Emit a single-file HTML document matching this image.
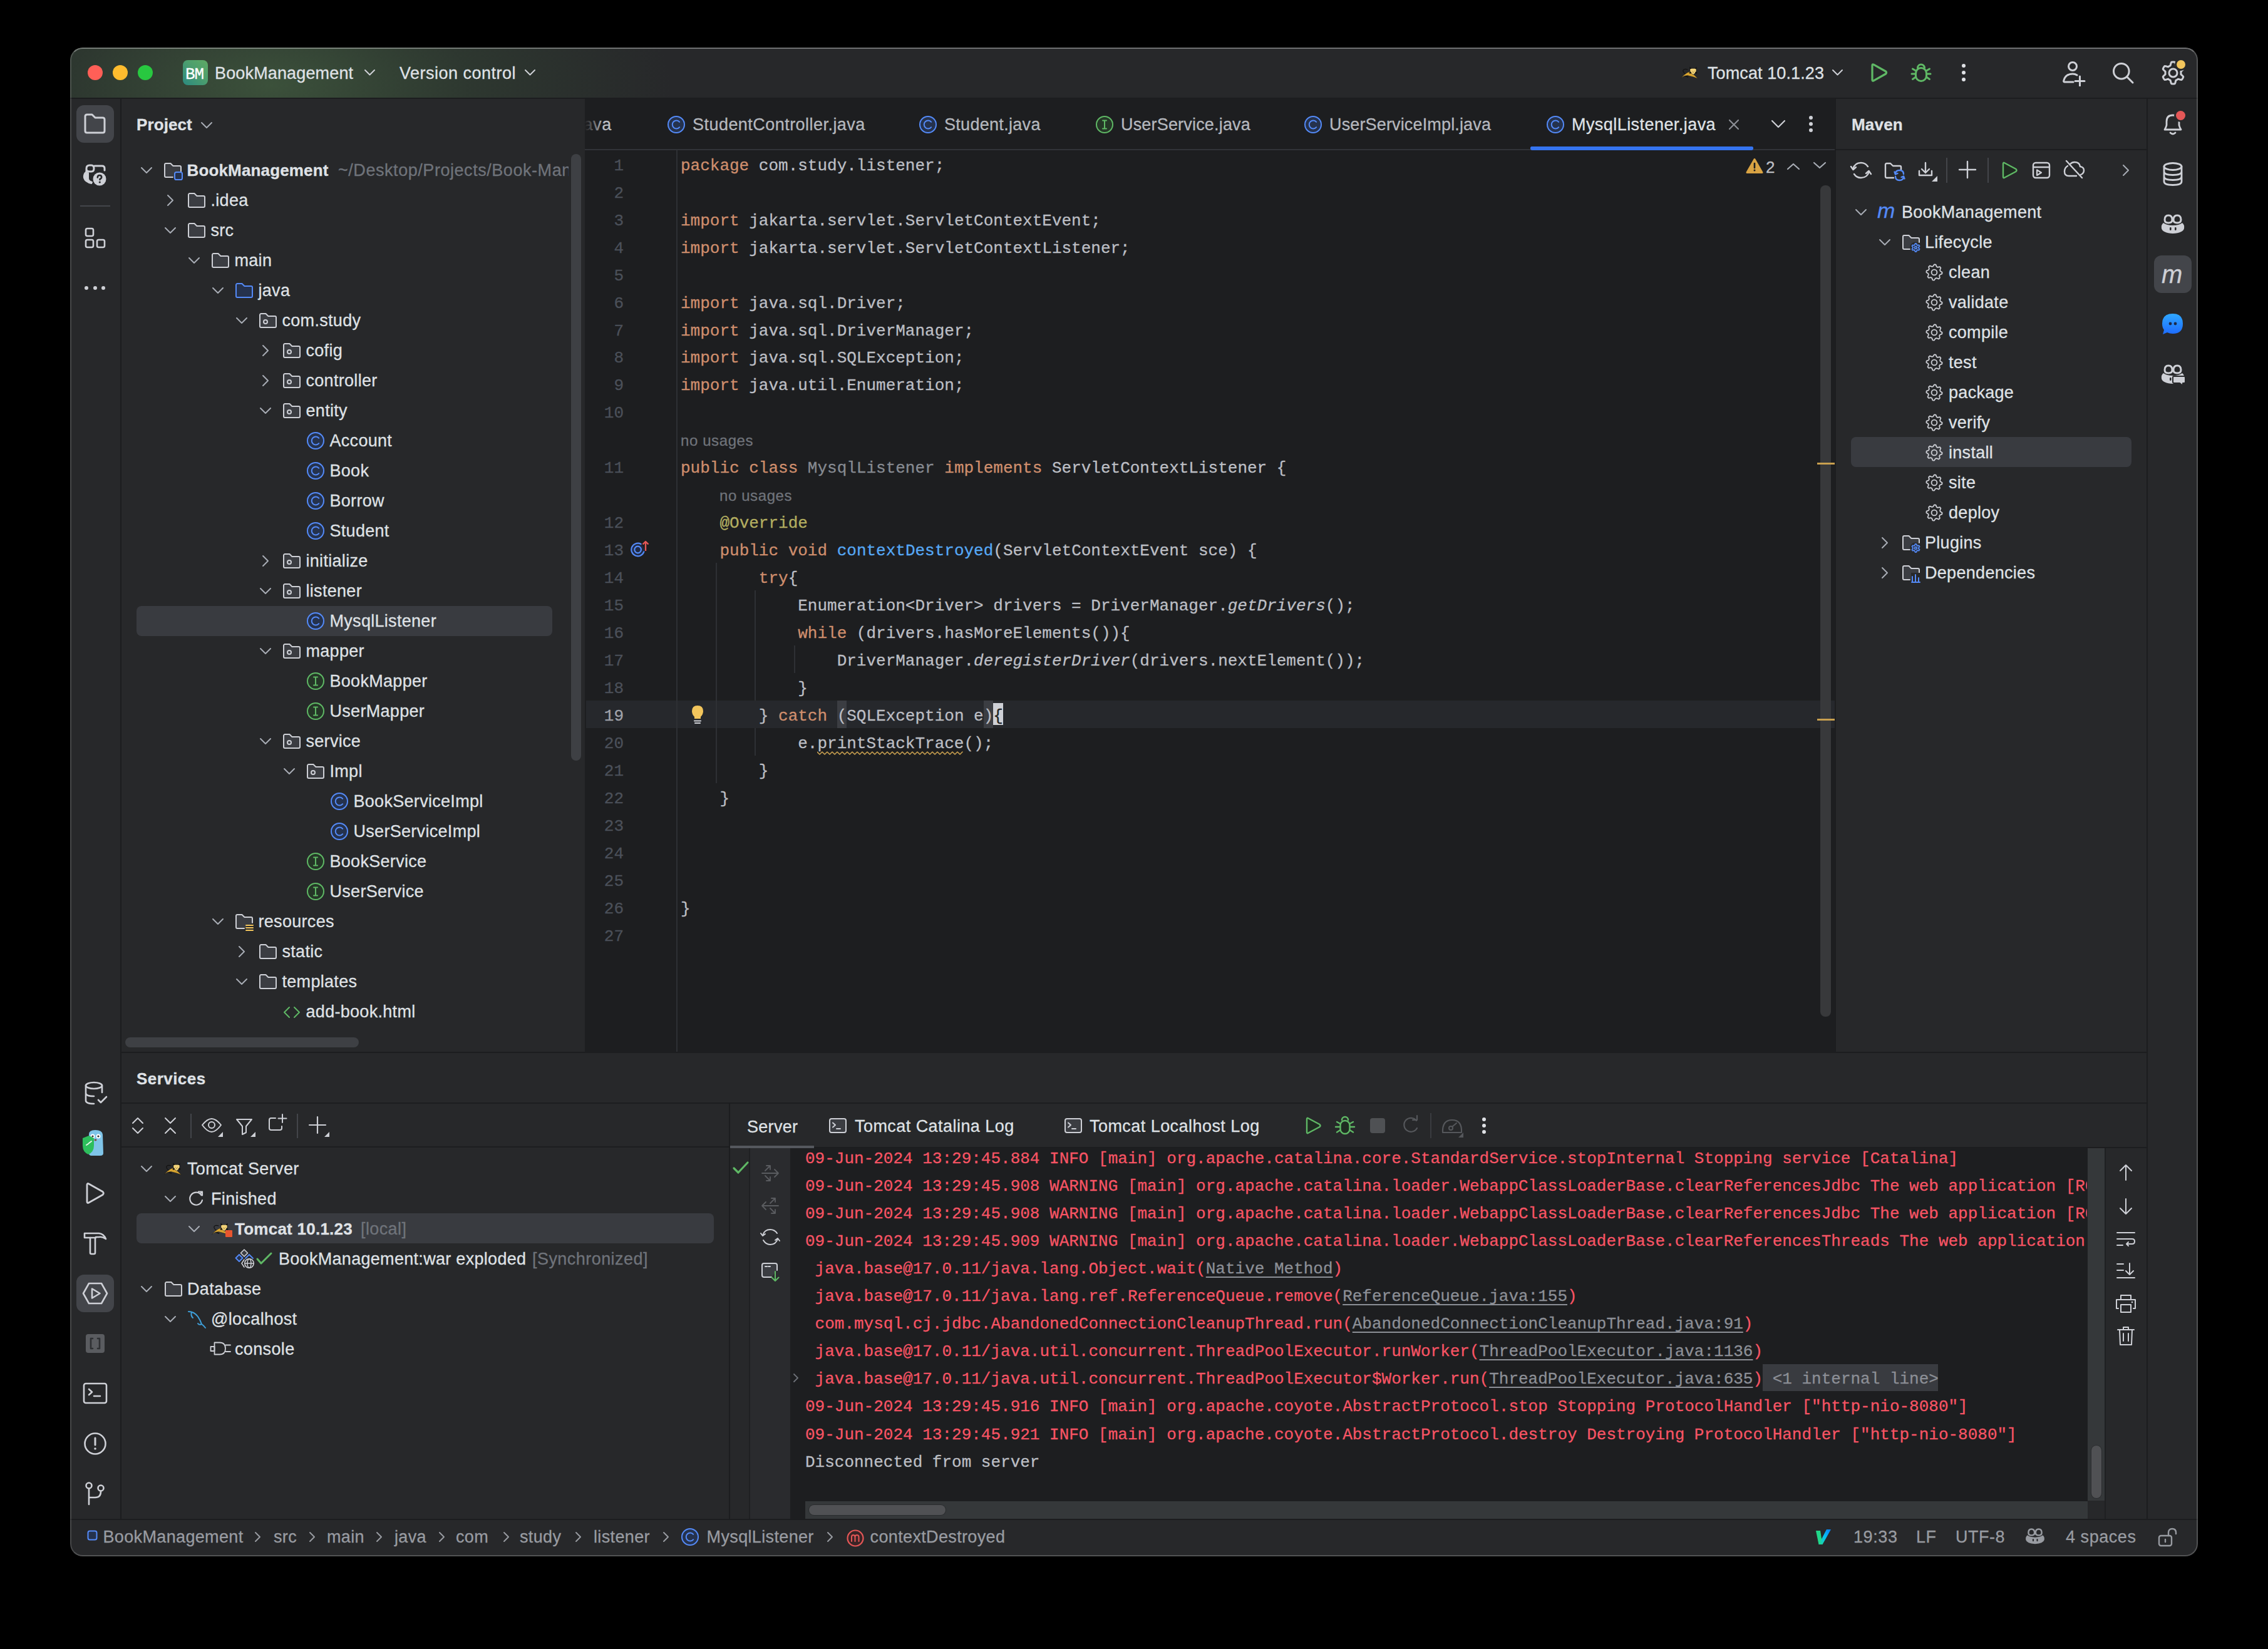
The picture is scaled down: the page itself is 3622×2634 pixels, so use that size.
<!DOCTYPE html>
<html><head><meta charset="utf-8"><title>IntelliJ IDEA</title>
<style>
html,body{margin:0;padding:0;background:#000;width:3622px;height:2634px;overflow:hidden;}
#clip div{-webkit-text-stroke:0.3px currentColor;}
#clip{position:absolute;left:0;top:0;width:3622px;height:2634px;clip-path:inset(76px 112px 148px 112px round 20px);}
</style></head><body>
<div id="clip">
<div style="position:absolute;left:112px;top:76px;width:3398px;height:2410px;background:#27282A;border-radius:20px;"></div>
<div style="position:absolute;left:112px;top:76px;width:3398px;height:80px;border-radius:20px 20px 0 0;background:radial-gradient(ellipse 640px 280px at 320px 60px, rgba(78,118,74,0.52), rgba(62,95,62,0.28) 50%, rgba(39,40,42,0) 100%), #27282A;"></div>
<div style="position:absolute;left:112px;top:156px;width:3398px;height:2px;background:#1C1D1F;border-radius:0px;"></div>
<div style="position:absolute;left:192px;top:158px;width:2px;height:2268px;background:#1C1D1F;border-radius:0px;"></div>
<div style="position:absolute;left:3428px;top:158px;width:2px;height:2268px;background:#1C1D1F;border-radius:0px;"></div>
<div style="position:absolute;left:934px;top:158px;width:1998px;height:1522px;background:#1D1E20;border-radius:0px;"></div>
<div style="position:absolute;left:2930px;top:158px;width:2px;height:1522px;background:#1C1D1F;border-radius:0px;"></div>
<div style="position:absolute;left:194px;top:1680px;width:3234px;height:2px;background:#1C1D1F;border-radius:0px;"></div>
<div style="position:absolute;left:112px;top:2426px;width:3398px;height:2px;background:#1C1D1F;border-radius:0px;"></div>
<div style="position:absolute;left:140px;top:104px;width:24px;height:24px;border-radius:12px;background:#FF5F57"></div>
<div style="position:absolute;left:180px;top:104px;width:24px;height:24px;border-radius:12px;background:#FEBC2E"></div>
<div style="position:absolute;left:220px;top:104px;width:24px;height:24px;border-radius:12px;background:#28C840"></div>
<div style="position:absolute;left:292px;top:96px;width:40px;height:40px;border-radius:8px;background:linear-gradient(45deg,#2B8A80 0%,#4C9E6E 55%,#5FAA64 100%)"></div>
<div style="position:absolute;left:296px;top:106px;font-family:'Liberation Mono', monospace;font-size:26px;line-height:26px;font-weight:400;color:#FFFFFF;letter-spacing:-1.2px;white-space:pre;">BM</div>
<div style="position:absolute;left:343px;top:104px;font-family:'Liberation Sans', sans-serif;font-size:27px;line-height:27px;font-weight:400;color:#DFE1E5;letter-spacing:0.15px;white-space:pre;">BookManagement</div>
<svg style="position:absolute;left:580.5px;top:110.25px;" width="19" height="11.5" viewBox="0 0 19 11.5" fill="none" stroke-linecap="round" stroke-linejoin="round"><path d="M2 2L9.5 9.5L17 2" stroke="#CED0D6" stroke-width="2"/></svg>
<div style="position:absolute;left:638px;top:104px;font-family:'Liberation Sans', sans-serif;font-size:27px;line-height:27px;font-weight:400;color:#DFE1E5;letter-spacing:0.5px;white-space:pre;">Version control</div>
<svg style="position:absolute;left:836.5px;top:110.25px;" width="19" height="11.5" viewBox="0 0 19 11.5" fill="none" stroke-linecap="round" stroke-linejoin="round"><path d="M2 2L9.5 9.5L17 2" stroke="#CED0D6" stroke-width="2"/></svg>
<svg style="position:absolute;left:2676px;top:94px;" width="44" height="44" viewBox="0 0 44 44" fill="none" stroke-linecap="round" stroke-linejoin="round"><path d="M16 25Q11 21 12 18Q14 15.5 19 17" stroke="#111" stroke-width="1.2" fill="none"/><path d="M14 27L19.5 29" stroke="#111" stroke-width="1.6"/><path d="M8.5 30.5L13 26Q18 21.5 23.5 20L27 23.5Q31 27 35.5 31.5Q28 28.5 19 26.5L13.5 27.5Z" fill="#D9A530" stroke="#1a1a1a" stroke-width="0.5"/><path d="M23 14L25.3 15.3H30.7L33 14V19.5Q31.5 23.5 28 25.5Q24.5 23.5 23 19.5Z" fill="#F6D67A" stroke="#111" stroke-width="0.6"/><path d="M22.5 12.5L25.5 15.5L23 16.5ZM33.5 12.5L30.5 15.5L33 16.5Z" fill="#111"/><ellipse cx="23.3" cy="22.3" rx="1.6" ry="1.4" fill="#111"/><ellipse cx="32.7" cy="22.3" rx="1.6" ry="1.4" fill="#111"/><path d="M26 19.5L27 20.3M30 19.5L29 20.3M27.3 21.8H28.7" stroke="#8a6a2a" stroke-width="0.7"/></svg>
<div style="position:absolute;left:2727px;top:104px;font-family:'Liberation Sans', sans-serif;font-size:27px;line-height:27px;font-weight:400;color:#DFE1E5;letter-spacing:0.1px;white-space:pre;">Tomcat 10.1.23</div>
<svg style="position:absolute;left:2924.5px;top:110.25px;" width="19" height="11.5" viewBox="0 0 19 11.5" fill="none" stroke-linecap="round" stroke-linejoin="round"><path d="M2 2L9.5 9.5L17 2" stroke="#CED0D6" stroke-width="2"/></svg>
<svg style="position:absolute;left:2984px;top:98px;" width="34" height="36" viewBox="0 0 34 36" fill="none" stroke-linecap="round" stroke-linejoin="round"><path d="M6 6.5Q6 4 8.2 5.2L27.5 16Q29.5 18 27.5 20L8.2 30.8Q6 32 6 29.5Z" stroke="#5FB865" stroke-width="3.2"/></svg>
<svg style="position:absolute;left:3050px;top:98px;" width="36" height="36" viewBox="0 0 36 36" fill="none" stroke-linecap="round" stroke-linejoin="round"><path d="M12.5 10.5A5.5 5.5 0 0 1 23.5 10.5" stroke="#5FB865" stroke-width="3"/><rect x="9.5" y="10.5" width="17" height="21" rx="8.5" stroke="#5FB865" stroke-width="3"/><path d="M3 20H9.5M26.5 20H33M4.5 12L9.5 15M31.5 12L26.5 15M4.5 28.5L9.5 25M31.5 28.5L26.5 25" stroke="#5FB865" stroke-width="3"/></svg>
<div style="position:absolute;left:3133px;top:102px;width:6px;height:6px;border-radius:3px;background:#DFE1E5"></div>
<div style="position:absolute;left:3133px;top:113px;width:6px;height:6px;border-radius:3px;background:#DFE1E5"></div>
<div style="position:absolute;left:3133px;top:124px;width:6px;height:6px;border-radius:3px;background:#DFE1E5"></div>
<svg style="position:absolute;left:3290px;top:94px;" width="44" height="44" viewBox="0 0 44 44" fill="none" stroke-linecap="round" stroke-linejoin="round"><circle cx="20" cy="12" r="6.5" stroke="#CED0D6" stroke-width="3"/><path d="M21 37H7Q5 37 6 34Q9 24 20 24Q24 24 27 26" stroke="#CED0D6" stroke-width="3"/><path d="M31.5 28V43M24 35.5H39" stroke="#CED0D6" stroke-width="3"/></svg>
<svg style="position:absolute;left:3370px;top:96px;" width="42" height="42" viewBox="0 0 42 42" fill="none" stroke-linecap="round" stroke-linejoin="round"><circle cx="17.8" cy="17.7" r="12.3" stroke="#CED0D6" stroke-width="3"/><path d="M27 27L36 36" stroke="#CED0D6" stroke-width="3"/></svg>
<svg style="position:absolute;left:3449.5px;top:95.5px;" width="41.0" height="41.0" viewBox="0 0 41.0 41.0" fill="none" stroke-linecap="round" stroke-linejoin="round"><path d="M20.50 3.00L21.42 3.02L22.33 3.10L23.22 3.32L23.86 4.71L24.32 6.25L24.63 7.79L24.98 8.83L25.58 9.08L26.17 9.36L26.75 9.67L27.31 10.02L27.85 10.39L28.37 10.79L29.44 10.57L30.93 10.07L32.49 9.70L34.02 9.55L34.66 10.21L35.18 10.97L35.66 11.75L36.09 12.56L36.49 13.38L36.74 14.27L35.85 15.51L34.75 16.68L33.57 17.72L32.85 18.54L32.93 19.19L32.98 19.85L33.00 20.50L32.98 21.15L32.93 21.81L32.85 22.46L33.57 23.28L34.75 24.32L35.85 25.49L36.74 26.73L36.49 27.62L36.09 28.44L35.66 29.25L35.18 30.03L34.66 30.79L34.02 31.45L32.49 31.30L30.93 30.93L29.44 30.43L28.37 30.21L27.85 30.61L27.31 30.98L26.75 31.33L26.17 31.64L25.58 31.92L24.98 32.17L24.63 33.21L24.32 34.75L23.86 36.29L23.22 37.68L22.33 37.90L21.42 37.98L20.50 38.00L19.58 37.98L18.67 37.90L17.78 37.68L17.14 36.29L16.68 34.75L16.37 33.21L16.02 32.17L15.42 31.92L14.83 31.64L14.25 31.33L13.69 30.98L13.15 30.61L12.63 30.21L11.56 30.43L10.07 30.93L8.51 31.30L6.98 31.45L6.34 30.79L5.82 30.03L5.34 29.25L4.91 28.44L4.51 27.62L4.26 26.73L5.15 25.49L6.25 24.32L7.43 23.28L8.15 22.46L8.07 21.81L8.02 21.15L8.00 20.50L8.02 19.85L8.07 19.19L8.15 18.54L7.43 17.72L6.25 16.68L5.15 15.51L4.26 14.27L4.51 13.38L4.91 12.56L5.34 11.75L5.82 10.97L6.34 10.21L6.98 9.55L8.51 9.70L10.07 10.07L11.56 10.57L12.63 10.79L13.15 10.39L13.69 10.02L14.25 9.67L14.83 9.36L15.42 9.08L16.02 8.83L16.37 7.79L16.68 6.25L17.14 4.71L17.78 3.32L18.67 3.10L19.58 3.02Z" stroke="#CED0D6" stroke-width="3"/><circle cx="20.5" cy="20.5" r="6.5" stroke="#CED0D6" stroke-width="3"/></svg>
<div style="position:absolute;left:3476px;top:96px;width:14px;height:14px;border-radius:7px;background:#F2C55C;box-shadow:0 0 0 3px #27282A"></div>
<div style="position:absolute;left:122px;top:168px;width:60px;height:60px;background:#43454A;border-radius:12px;"></div>
<svg style="position:absolute;left:130px;top:176px;" width="44" height="44" viewBox="0 0 44 44" fill="none" stroke-linecap="round" stroke-linejoin="round"><path d="M6 10Q6 7 9 7H17L22 12H34Q37 12 37 15V33Q37 36 34 36H9Q6 36 6 33Z" stroke="#CED0D6" stroke-width="3"/></svg>
<svg style="position:absolute;left:130px;top:256px;" width="44" height="44" viewBox="0 0 44 44" fill="none" stroke-linecap="round" stroke-linejoin="round"><path d="M8 20V13Q8 8 13 8H16Q20 8 20 13Q20 18 16 18H13Q8 18 8 14" stroke="#CED0D6" stroke-width="3"/><path d="M21 9H33Q37 9 37 13V16" stroke="#CED0D6" stroke-width="3"/><path d="M8 18Q3 22 4 28Q6 35 16 37L17 35Q11 33 11 29V20" fill="#CED0D6" stroke="#CED0D6" stroke-width="2"/><circle cx="29" cy="30" r="10.5" fill="#CED0D6"/><path d="M25.8 27.5Q25.8 24 29 24Q32.2 24 32.2 27Q32.2 29 29.5 30V31" stroke="#27282A" stroke-width="2.6"/><circle cx="29.3" cy="35" r="1.6" fill="#27282A"/></svg>
<div style="position:absolute;left:128px;top:328px;width:48px;height:2px;background:#43454A;border-radius:0px;"></div>
<svg style="position:absolute;left:130px;top:358px;" width="44" height="44" viewBox="0 0 44 44" fill="none" stroke-linecap="round" stroke-linejoin="round"><rect x="7" y="7" width="12" height="12" rx="2.5" stroke="#CED0D6" stroke-width="2.6"/><rect x="7" y="25" width="12" height="12" rx="2.5" stroke="#CED0D6" stroke-width="2.6"/><rect x="25" y="25" width="12" height="12" rx="2.5" stroke="#CED0D6" stroke-width="2.6"/></svg>
<div style="position:absolute;left:135px;top:457px;width:6px;height:6px;border-radius:3px;background:#CED0D6"></div>
<div style="position:absolute;left:149px;top:457px;width:6px;height:6px;border-radius:3px;background:#CED0D6"></div>
<div style="position:absolute;left:162px;top:457px;width:6px;height:6px;border-radius:3px;background:#CED0D6"></div>
<svg style="position:absolute;left:130px;top:1724px;" width="44" height="44" viewBox="0 0 44 44" fill="none" stroke-linecap="round" stroke-linejoin="round"><ellipse cx="20" cy="10" rx="13" ry="5" stroke="#CED0D6" stroke-width="2.6"/><path d="M7 10V34Q7 39 20 39M7 22Q7 27 20 27M33 10V21" stroke="#CED0D6" stroke-width="2.6"/><path d="M27 33L31 37L40 28" stroke="#CED0D6" stroke-width="2.6"/></svg>
<svg style="position:absolute;left:130px;top:1802px;" width="44" height="46" viewBox="0 0 44 46" fill="none" stroke-linecap="round" stroke-linejoin="round"><path d="M12 10Q12 3 22 3Q33 3 34 10L35 40Q35 44 30 44H16Q12 44 12 40Z" fill="#7FC4E8"/><circle cx="18" cy="13" r="3.5" fill="#fff"/><circle cx="27" cy="13" r="3.5" fill="#fff"/><circle cx="18" cy="13" r="1.6" fill="#333"/><circle cx="27" cy="13" r="1.6" fill="#333"/><ellipse cx="22.5" cy="19" rx="2" ry="1.4" fill="#7a4a3a"/><path d="M2 16L12 12L20 16V28Q20 38 11 42Q2 38 2 28Z" fill="#2DBE5C"/><path d="M8 27L11 25M12 24L16 21" stroke="#E8F5EA" stroke-width="2"/></svg>
<svg style="position:absolute;left:130px;top:1884px;" width="44" height="44" viewBox="0 0 44 44" fill="none" stroke-linecap="round" stroke-linejoin="round"><path d="M9 8.5Q9 5.5 11.8 7L34 19.5Q36.5 22 34 24.5L11.8 37Q9 38.5 9 35.5Z" stroke="#CED0D6" stroke-width="2.8"/></svg>
<svg style="position:absolute;left:130px;top:1963px;" width="44" height="44" viewBox="0 0 44 44" fill="none" stroke-linecap="round" stroke-linejoin="round"><path d="M5 7H28Q36 8 39 16Q33 12 28 13H23V14H5Z" stroke="#CED0D6" stroke-width="2.6"/><path d="M14 14V38Q14 40 16 40H20Q22 40 22 38V14" stroke="#CED0D6" stroke-width="2.6"/></svg>
<div style="position:absolute;left:122px;top:2036px;width:60px;height:60px;background:#43454A;border-radius:12px;"></div>
<svg style="position:absolute;left:130px;top:2044px;" width="44" height="44" viewBox="0 0 44 44" fill="none" stroke-linecap="round" stroke-linejoin="round"><path d="M12 6H32L41 22L32 38H12L3 22Z" stroke="#CED0D6" stroke-width="2.6"/><path d="M17 14.5V29.5L29.5 22Z" stroke="#CED0D6" stroke-width="2.6"/></svg>
<div style="position:absolute;left:137px;top:2131px;width:30px;height:30px;background:#5A5C60;border-radius:4px;"></div>
<svg style="position:absolute;left:137px;top:2131px;" width="30" height="30" viewBox="0 0 30 30" fill="none" stroke-linecap="round" stroke-linejoin="round"><path d="M11 7H8V23H11M19 7H22V23H19" stroke="#2E3033" stroke-width="2.6"/></svg>
<svg style="position:absolute;left:130px;top:2204px;" width="44" height="44" viewBox="0 0 44 44" fill="none" stroke-linecap="round" stroke-linejoin="round"><rect x="4" y="6" width="36" height="31" rx="3" stroke="#CED0D6" stroke-width="2.6"/><path d="M12 15L17 19.5L12 24M20 26H30" stroke="#CED0D6" stroke-width="2.6"/></svg>
<svg style="position:absolute;left:130px;top:2284px;" width="44" height="44" viewBox="0 0 44 44" fill="none" stroke-linecap="round" stroke-linejoin="round"><circle cx="22" cy="22" r="16.5" stroke="#CED0D6" stroke-width="2.6"/><path d="M22 13V24" stroke="#CED0D6" stroke-width="3"/><circle cx="22" cy="30" r="1.8" fill="#CED0D6"/></svg>
<svg style="position:absolute;left:130px;top:2363px;" width="44" height="44" viewBox="0 0 44 44" fill="none" stroke-linecap="round" stroke-linejoin="round"><circle cx="12" cy="10" r="4.5" stroke="#CED0D6" stroke-width="2.6"/><circle cx="31" cy="14" r="4.5" stroke="#CED0D6" stroke-width="2.6"/><path d="M12 15V40M12 29H22Q31 29 31 19" stroke="#CED0D6" stroke-width="2.6"/></svg>
<svg style="position:absolute;left:3448px;top:256px;" width="44" height="44" viewBox="0 0 44 44" fill="none" stroke-linecap="round" stroke-linejoin="round"><ellipse cx="22" cy="10" rx="14" ry="5.5" stroke="#CED0D6" stroke-width="2.8"/><path d="M8 10V34Q8 39.5 22 39.5Q36 39.5 36 34V10M8 18Q8 23.5 22 23.5Q36 23.5 36 18M8 26Q8 31.5 22 31.5Q36 31.5 36 26" stroke="#CED0D6" stroke-width="2.8"/></svg>
<svg style="position:absolute;left:3448px;top:176px;" width="44" height="44" viewBox="0 0 44 44" fill="none" stroke-linecap="round" stroke-linejoin="round"><path d="M9 31H35Q33 28 32 24V18Q32 8 22 8Q12 8 12 18V24Q11 28 9 31Z" stroke="#CED0D6" stroke-width="2.8"/><path d="M18 36Q22 40 26 36" stroke="#CED0D6" stroke-width="2.8"/></svg>
<div style="position:absolute;left:3475px;top:177px;width:15px;height:15px;border-radius:8px;background:#E55757;box-shadow:0 0 0 3px #27282A"></div>
<svg style="position:absolute;left:3448px;top:336px;" width="44" height="44" viewBox="0 0 44 44" fill="none" stroke-linecap="round" stroke-linejoin="round"><path d="M9 15Q9 8 15 8Q21 8 21 15Q21 20 15 20Q9 20 9 15ZM23 15Q23 8 29 8Q35 8 35 15Q35 20 29 20Q23 20 23 15Z" stroke="#CED0D6" stroke-width="3"/><path d="M7 20Q3 23 4 29Q6 36 22 37Q38 36 40 29Q41 23 37 20Q32 24 22 24Q12 24 7 20Z" fill="#CED0D6"/><rect x="17" y="27" width="2.6" height="5" rx="1.3" fill="#27282A"/><rect x="25" y="27" width="2.6" height="5" rx="1.3" fill="#27282A"/></svg>
<div style="position:absolute;left:3440px;top:408px;width:60px;height:60px;background:#43454A;border-radius:12px;"></div>
<div style="position:absolute;left:3452px;top:418px;font-family:'Liberation Sans', sans-serif;font-size:40px;line-height:40px;font-weight:400;color:#CED0D6;letter-spacing:0px;white-space:pre;font-style:italic;font-weight:400">m</div>
<svg style="position:absolute;left:3448px;top:496px;" width="44" height="44" viewBox="0 0 44 44" fill="none" stroke-linecap="round" stroke-linejoin="round"><defs><linearGradient id="cb" x1="0" y1="0" x2="0" y2="1"><stop offset="0" stop-color="#2FA8FF"/><stop offset="1" stop-color="#1E6BFF"/></linearGradient></defs><path d="M22 5Q38 5 38 21Q38 37 22 37Q17 37 13 35L6 38L8 31Q5 27 5 21Q5 5 22 5Z" fill="url(#cb)"/><circle cx="18" cy="21" r="2.4" fill="#1b2a4a"/><circle cx="26" cy="21" r="2.4" fill="#1b2a4a"/></svg>
<svg style="position:absolute;left:3448px;top:576px;" width="44" height="44" viewBox="0 0 44 44" fill="none" stroke-linecap="round" stroke-linejoin="round"><path d="M9 15Q9 8 15 8Q21 8 21 15Q21 20 15 20Q9 20 9 15ZM23 15Q23 8 29 8Q35 8 35 15Q35 20 29 20Q23 20 23 15Z" stroke="#CED0D6" stroke-width="3"/><path d="M7 20Q3 23 4 29Q6 36 22 37Q38 36 40 29Q41 23 37 20Q32 24 22 24Q12 24 7 20Z" fill="#CED0D6"/><rect x="17" y="27" width="2.6" height="5" rx="1.3" fill="#27282A"/><rect x="25" y="27" width="2.6" height="5" rx="1.3" fill="#27282A"/><path d="M24 25H40Q42 25 42 27V34Q42 36 40 36H38V40L33 36H24Q22 36 22 34V27Q22 25 24 25Z" fill="#CED0D6" stroke="#27282A" stroke-width="2"/></svg>
<div style="position:absolute;left:218px;top:186px;font-family:'Liberation Sans', sans-serif;font-size:26px;line-height:26px;font-weight:700;color:#DFE1E5;letter-spacing:0.1px;white-space:pre;">Project</div>
<svg style="position:absolute;left:320.0px;top:194.0px;" width="20" height="12.0" viewBox="0 0 20 12.0" fill="none" stroke-linecap="round" stroke-linejoin="round"><path d="M2 2L10.0 10.0L18 2" stroke="#A8ADB5" stroke-width="2"/></svg>
<div style="position:absolute;left:218px;top:968px;width:664px;height:48px;background:#393B40;border-radius:8px;"></div>
<div style="position:absolute;left:194px;top:240px;width:714px;height:1405px;overflow:hidden">
<div style="position:absolute;left:-194px;top:-240px;width:3622px;height:2634px"><svg style="position:absolute;left:223.5px;top:266.0px;" width="20" height="12.0" viewBox="0 0 20 12.0" fill="none" stroke-linecap="round" stroke-linejoin="round"><path d="M2 2L10.0 10.0L18 2" stroke="#A8ADB5" stroke-width="2"/></svg>
<svg style="position:absolute;left:260.0px;top:256px;" width="32" height="32" viewBox="0 0 16 16" fill="none" stroke-linecap="round" stroke-linejoin="round"><path d="M14.5 9V5.5A1 1 0 0 0 13.5 4.5H8.2L6.2 2.5H2.5A1 1 0 0 0 1.5 3.5V12.5A1 1 0 0 0 2.5 13.5H8" fill="#3B3D42" stroke="#CED0D6" stroke-width="1"/><rect x="9.5" y="9.5" width="6" height="6" rx="1.3" fill="#25324D" stroke="#548AF7" stroke-width="1"/></svg>
<div style="position:absolute;left:298.5px;top:259px;font-family:'Liberation Sans', sans-serif;font-size:26px;line-height:26px;font-weight:700;color:#DFE1E5;letter-spacing:0.15px;white-space:pre;">BookManagement</div>
<div style="position:absolute;left:540px;top:259px;font-family:'Liberation Sans', sans-serif;font-size:27px;line-height:27px;font-weight:400;color:#6F737A;letter-spacing:0.55px;white-space:pre;">~/Desktop/Projects/Book-Management</div>
<svg style="position:absolute;left:265.5px;top:310.0px;" width="12.0" height="20" viewBox="0 0 12.0 20" fill="none" stroke-linecap="round" stroke-linejoin="round"><path d="M2 2L10.0 10.0L2 18" stroke="#A8ADB5" stroke-width="2"/></svg>
<svg style="position:absolute;left:298.0px;top:304px;" width="32" height="32" viewBox="0 0 16 16" fill="none" stroke-linecap="round" stroke-linejoin="round"><path d="M2.5 2.5H6.2L8.2 4.5H13.5A1 1 0 0 1 14.5 5.5V12.5A1 1 0 0 1 13.5 13.5H2.5A1 1 0 0 1 1.5 12.5V3.5A1 1 0 0 1 2.5 2.5Z" fill="#3B3D42" stroke="#CED0D6" stroke-width="1"/></svg>
<div style="position:absolute;left:336.5px;top:307px;font-family:'Liberation Sans', sans-serif;font-size:27px;line-height:27px;font-weight:400;color:#DFE1E5;letter-spacing:0.3px;white-space:pre;">.idea</div>
<svg style="position:absolute;left:261.5px;top:362.0px;" width="20" height="12.0" viewBox="0 0 20 12.0" fill="none" stroke-linecap="round" stroke-linejoin="round"><path d="M2 2L10.0 10.0L18 2" stroke="#A8ADB5" stroke-width="2"/></svg>
<svg style="position:absolute;left:298.0px;top:352px;" width="32" height="32" viewBox="0 0 16 16" fill="none" stroke-linecap="round" stroke-linejoin="round"><path d="M2.5 2.5H6.2L8.2 4.5H13.5A1 1 0 0 1 14.5 5.5V12.5A1 1 0 0 1 13.5 13.5H2.5A1 1 0 0 1 1.5 12.5V3.5A1 1 0 0 1 2.5 2.5Z" fill="#3B3D42" stroke="#CED0D6" stroke-width="1"/></svg>
<div style="position:absolute;left:336.5px;top:355px;font-family:'Liberation Sans', sans-serif;font-size:27px;line-height:27px;font-weight:400;color:#DFE1E5;letter-spacing:0.3px;white-space:pre;">src</div>
<svg style="position:absolute;left:299.5px;top:410.0px;" width="20" height="12.0" viewBox="0 0 20 12.0" fill="none" stroke-linecap="round" stroke-linejoin="round"><path d="M2 2L10.0 10.0L18 2" stroke="#A8ADB5" stroke-width="2"/></svg>
<svg style="position:absolute;left:336.0px;top:400px;" width="32" height="32" viewBox="0 0 16 16" fill="none" stroke-linecap="round" stroke-linejoin="round"><path d="M2.5 2.5H6.2L8.2 4.5H13.5A1 1 0 0 1 14.5 5.5V12.5A1 1 0 0 1 13.5 13.5H2.5A1 1 0 0 1 1.5 12.5V3.5A1 1 0 0 1 2.5 2.5Z" fill="#3B3D42" stroke="#CED0D6" stroke-width="1"/></svg>
<div style="position:absolute;left:374.5px;top:403px;font-family:'Liberation Sans', sans-serif;font-size:27px;line-height:27px;font-weight:400;color:#DFE1E5;letter-spacing:0.3px;white-space:pre;">main</div>
<svg style="position:absolute;left:337.5px;top:458.0px;" width="20" height="12.0" viewBox="0 0 20 12.0" fill="none" stroke-linecap="round" stroke-linejoin="round"><path d="M2 2L10.0 10.0L18 2" stroke="#A8ADB5" stroke-width="2"/></svg>
<svg style="position:absolute;left:374.0px;top:448px;" width="32" height="32" viewBox="0 0 16 16" fill="none" stroke-linecap="round" stroke-linejoin="round"><path d="M2.5 2.5H6.2L8.2 4.5H13.5A1 1 0 0 1 14.5 5.5V12.5A1 1 0 0 1 13.5 13.5H2.5A1 1 0 0 1 1.5 12.5V3.5A1 1 0 0 1 2.5 2.5Z" fill="#25324D" stroke="#548AF7" stroke-width="1"/></svg>
<div style="position:absolute;left:412.5px;top:451px;font-family:'Liberation Sans', sans-serif;font-size:27px;line-height:27px;font-weight:400;color:#DFE1E5;letter-spacing:0.3px;white-space:pre;">java</div>
<svg style="position:absolute;left:375.5px;top:506.0px;" width="20" height="12.0" viewBox="0 0 20 12.0" fill="none" stroke-linecap="round" stroke-linejoin="round"><path d="M2 2L10.0 10.0L18 2" stroke="#A8ADB5" stroke-width="2"/></svg>
<svg style="position:absolute;left:412.0px;top:496px;" width="32" height="32" viewBox="0 0 16 16" fill="none" stroke-linecap="round" stroke-linejoin="round"><path d="M2.5 2.5H6.2L8.2 4.5H13.5A1 1 0 0 1 14.5 5.5V12.5A1 1 0 0 1 13.5 13.5H2.5A1 1 0 0 1 1.5 12.5V3.5A1 1 0 0 1 2.5 2.5Z" fill="#3B3D42" stroke="#CED0D6" stroke-width="1"/><circle cx="6" cy="9" r="1.5" stroke="#CED0D6" stroke-width="1"/></svg>
<div style="position:absolute;left:450.5px;top:499px;font-family:'Liberation Sans', sans-serif;font-size:27px;line-height:27px;font-weight:400;color:#DFE1E5;letter-spacing:0.3px;white-space:pre;">com.study</div>
<svg style="position:absolute;left:417.5px;top:550.0px;" width="12.0" height="20" viewBox="0 0 12.0 20" fill="none" stroke-linecap="round" stroke-linejoin="round"><path d="M2 2L10.0 10.0L2 18" stroke="#A8ADB5" stroke-width="2"/></svg>
<svg style="position:absolute;left:450.0px;top:544px;" width="32" height="32" viewBox="0 0 16 16" fill="none" stroke-linecap="round" stroke-linejoin="round"><path d="M2.5 2.5H6.2L8.2 4.5H13.5A1 1 0 0 1 14.5 5.5V12.5A1 1 0 0 1 13.5 13.5H2.5A1 1 0 0 1 1.5 12.5V3.5A1 1 0 0 1 2.5 2.5Z" fill="#3B3D42" stroke="#CED0D6" stroke-width="1"/><circle cx="6" cy="9" r="1.5" stroke="#CED0D6" stroke-width="1"/></svg>
<div style="position:absolute;left:488.5px;top:547px;font-family:'Liberation Sans', sans-serif;font-size:27px;line-height:27px;font-weight:400;color:#DFE1E5;letter-spacing:0.3px;white-space:pre;">cofig</div>
<svg style="position:absolute;left:417.5px;top:598.0px;" width="12.0" height="20" viewBox="0 0 12.0 20" fill="none" stroke-linecap="round" stroke-linejoin="round"><path d="M2 2L10.0 10.0L2 18" stroke="#A8ADB5" stroke-width="2"/></svg>
<svg style="position:absolute;left:450.0px;top:592px;" width="32" height="32" viewBox="0 0 16 16" fill="none" stroke-linecap="round" stroke-linejoin="round"><path d="M2.5 2.5H6.2L8.2 4.5H13.5A1 1 0 0 1 14.5 5.5V12.5A1 1 0 0 1 13.5 13.5H2.5A1 1 0 0 1 1.5 12.5V3.5A1 1 0 0 1 2.5 2.5Z" fill="#3B3D42" stroke="#CED0D6" stroke-width="1"/><circle cx="6" cy="9" r="1.5" stroke="#CED0D6" stroke-width="1"/></svg>
<div style="position:absolute;left:488.5px;top:595px;font-family:'Liberation Sans', sans-serif;font-size:27px;line-height:27px;font-weight:400;color:#DFE1E5;letter-spacing:0.3px;white-space:pre;">controller</div>
<svg style="position:absolute;left:413.5px;top:650.0px;" width="20" height="12.0" viewBox="0 0 20 12.0" fill="none" stroke-linecap="round" stroke-linejoin="round"><path d="M2 2L10.0 10.0L18 2" stroke="#A8ADB5" stroke-width="2"/></svg>
<svg style="position:absolute;left:450.0px;top:640px;" width="32" height="32" viewBox="0 0 16 16" fill="none" stroke-linecap="round" stroke-linejoin="round"><path d="M2.5 2.5H6.2L8.2 4.5H13.5A1 1 0 0 1 14.5 5.5V12.5A1 1 0 0 1 13.5 13.5H2.5A1 1 0 0 1 1.5 12.5V3.5A1 1 0 0 1 2.5 2.5Z" fill="#3B3D42" stroke="#CED0D6" stroke-width="1"/><circle cx="6" cy="9" r="1.5" stroke="#CED0D6" stroke-width="1"/></svg>
<div style="position:absolute;left:488.5px;top:643px;font-family:'Liberation Sans', sans-serif;font-size:27px;line-height:27px;font-weight:400;color:#DFE1E5;letter-spacing:0.3px;white-space:pre;">entity</div>
<svg style="position:absolute;left:488.0px;top:688px;" width="32" height="32" viewBox="0 0 16 16" fill="none" stroke-linecap="round" stroke-linejoin="round"><circle cx="8" cy="8" r="6.5" fill="#25324D" stroke="#548AF7" stroke-width="1"/><path d="M10.6 5.9A3.25 3.25 0 1 0 10.6 10.1" stroke="#548AF7" stroke-width="1"/></svg>
<div style="position:absolute;left:526.5px;top:691px;font-family:'Liberation Sans', sans-serif;font-size:27px;line-height:27px;font-weight:400;color:#DFE1E5;letter-spacing:0.3px;white-space:pre;">Account</div>
<svg style="position:absolute;left:488.0px;top:736px;" width="32" height="32" viewBox="0 0 16 16" fill="none" stroke-linecap="round" stroke-linejoin="round"><circle cx="8" cy="8" r="6.5" fill="#25324D" stroke="#548AF7" stroke-width="1"/><path d="M10.6 5.9A3.25 3.25 0 1 0 10.6 10.1" stroke="#548AF7" stroke-width="1"/></svg>
<div style="position:absolute;left:526.5px;top:739px;font-family:'Liberation Sans', sans-serif;font-size:27px;line-height:27px;font-weight:400;color:#DFE1E5;letter-spacing:0.3px;white-space:pre;">Book</div>
<svg style="position:absolute;left:488.0px;top:784px;" width="32" height="32" viewBox="0 0 16 16" fill="none" stroke-linecap="round" stroke-linejoin="round"><circle cx="8" cy="8" r="6.5" fill="#25324D" stroke="#548AF7" stroke-width="1"/><path d="M10.6 5.9A3.25 3.25 0 1 0 10.6 10.1" stroke="#548AF7" stroke-width="1"/></svg>
<div style="position:absolute;left:526.5px;top:787px;font-family:'Liberation Sans', sans-serif;font-size:27px;line-height:27px;font-weight:400;color:#DFE1E5;letter-spacing:0.3px;white-space:pre;">Borrow</div>
<svg style="position:absolute;left:488.0px;top:832px;" width="32" height="32" viewBox="0 0 16 16" fill="none" stroke-linecap="round" stroke-linejoin="round"><circle cx="8" cy="8" r="6.5" fill="#25324D" stroke="#548AF7" stroke-width="1"/><path d="M10.6 5.9A3.25 3.25 0 1 0 10.6 10.1" stroke="#548AF7" stroke-width="1"/></svg>
<div style="position:absolute;left:526.5px;top:835px;font-family:'Liberation Sans', sans-serif;font-size:27px;line-height:27px;font-weight:400;color:#DFE1E5;letter-spacing:0.3px;white-space:pre;">Student</div>
<svg style="position:absolute;left:417.5px;top:886.0px;" width="12.0" height="20" viewBox="0 0 12.0 20" fill="none" stroke-linecap="round" stroke-linejoin="round"><path d="M2 2L10.0 10.0L2 18" stroke="#A8ADB5" stroke-width="2"/></svg>
<svg style="position:absolute;left:450.0px;top:880px;" width="32" height="32" viewBox="0 0 16 16" fill="none" stroke-linecap="round" stroke-linejoin="round"><path d="M2.5 2.5H6.2L8.2 4.5H13.5A1 1 0 0 1 14.5 5.5V12.5A1 1 0 0 1 13.5 13.5H2.5A1 1 0 0 1 1.5 12.5V3.5A1 1 0 0 1 2.5 2.5Z" fill="#3B3D42" stroke="#CED0D6" stroke-width="1"/><circle cx="6" cy="9" r="1.5" stroke="#CED0D6" stroke-width="1"/></svg>
<div style="position:absolute;left:488.5px;top:883px;font-family:'Liberation Sans', sans-serif;font-size:27px;line-height:27px;font-weight:400;color:#DFE1E5;letter-spacing:0.3px;white-space:pre;">initialize</div>
<svg style="position:absolute;left:413.5px;top:938.0px;" width="20" height="12.0" viewBox="0 0 20 12.0" fill="none" stroke-linecap="round" stroke-linejoin="round"><path d="M2 2L10.0 10.0L18 2" stroke="#A8ADB5" stroke-width="2"/></svg>
<svg style="position:absolute;left:450.0px;top:928px;" width="32" height="32" viewBox="0 0 16 16" fill="none" stroke-linecap="round" stroke-linejoin="round"><path d="M2.5 2.5H6.2L8.2 4.5H13.5A1 1 0 0 1 14.5 5.5V12.5A1 1 0 0 1 13.5 13.5H2.5A1 1 0 0 1 1.5 12.5V3.5A1 1 0 0 1 2.5 2.5Z" fill="#3B3D42" stroke="#CED0D6" stroke-width="1"/><circle cx="6" cy="9" r="1.5" stroke="#CED0D6" stroke-width="1"/></svg>
<div style="position:absolute;left:488.5px;top:931px;font-family:'Liberation Sans', sans-serif;font-size:27px;line-height:27px;font-weight:400;color:#DFE1E5;letter-spacing:0.3px;white-space:pre;">listener</div>
<svg style="position:absolute;left:488.0px;top:976px;" width="32" height="32" viewBox="0 0 16 16" fill="none" stroke-linecap="round" stroke-linejoin="round"><circle cx="8" cy="8" r="6.5" fill="#25324D" stroke="#548AF7" stroke-width="1"/><path d="M10.6 5.9A3.25 3.25 0 1 0 10.6 10.1" stroke="#548AF7" stroke-width="1"/></svg>
<div style="position:absolute;left:526.5px;top:979px;font-family:'Liberation Sans', sans-serif;font-size:27px;line-height:27px;font-weight:400;color:#DFE1E5;letter-spacing:0.3px;white-space:pre;">MysqlListener</div>
<svg style="position:absolute;left:413.5px;top:1034.0px;" width="20" height="12.0" viewBox="0 0 20 12.0" fill="none" stroke-linecap="round" stroke-linejoin="round"><path d="M2 2L10.0 10.0L18 2" stroke="#A8ADB5" stroke-width="2"/></svg>
<svg style="position:absolute;left:450.0px;top:1024px;" width="32" height="32" viewBox="0 0 16 16" fill="none" stroke-linecap="round" stroke-linejoin="round"><path d="M2.5 2.5H6.2L8.2 4.5H13.5A1 1 0 0 1 14.5 5.5V12.5A1 1 0 0 1 13.5 13.5H2.5A1 1 0 0 1 1.5 12.5V3.5A1 1 0 0 1 2.5 2.5Z" fill="#3B3D42" stroke="#CED0D6" stroke-width="1"/><circle cx="6" cy="9" r="1.5" stroke="#CED0D6" stroke-width="1"/></svg>
<div style="position:absolute;left:488.5px;top:1027px;font-family:'Liberation Sans', sans-serif;font-size:27px;line-height:27px;font-weight:400;color:#DFE1E5;letter-spacing:0.3px;white-space:pre;">mapper</div>
<svg style="position:absolute;left:488.0px;top:1072px;" width="32" height="32" viewBox="0 0 16 16" fill="none" stroke-linecap="round" stroke-linejoin="round"><circle cx="8" cy="8" r="6.5" fill="#253627" stroke="#5FB865" stroke-width="1"/><path d="M6.5 4.8H9.5M6.5 11.2H9.5M8 4.8V11.2" stroke="#5FB865" stroke-width="1"/></svg>
<div style="position:absolute;left:526.5px;top:1075px;font-family:'Liberation Sans', sans-serif;font-size:27px;line-height:27px;font-weight:400;color:#DFE1E5;letter-spacing:0.3px;white-space:pre;">BookMapper</div>
<svg style="position:absolute;left:488.0px;top:1120px;" width="32" height="32" viewBox="0 0 16 16" fill="none" stroke-linecap="round" stroke-linejoin="round"><circle cx="8" cy="8" r="6.5" fill="#253627" stroke="#5FB865" stroke-width="1"/><path d="M6.5 4.8H9.5M6.5 11.2H9.5M8 4.8V11.2" stroke="#5FB865" stroke-width="1"/></svg>
<div style="position:absolute;left:526.5px;top:1123px;font-family:'Liberation Sans', sans-serif;font-size:27px;line-height:27px;font-weight:400;color:#DFE1E5;letter-spacing:0.3px;white-space:pre;">UserMapper</div>
<svg style="position:absolute;left:413.5px;top:1178.0px;" width="20" height="12.0" viewBox="0 0 20 12.0" fill="none" stroke-linecap="round" stroke-linejoin="round"><path d="M2 2L10.0 10.0L18 2" stroke="#A8ADB5" stroke-width="2"/></svg>
<svg style="position:absolute;left:450.0px;top:1168px;" width="32" height="32" viewBox="0 0 16 16" fill="none" stroke-linecap="round" stroke-linejoin="round"><path d="M2.5 2.5H6.2L8.2 4.5H13.5A1 1 0 0 1 14.5 5.5V12.5A1 1 0 0 1 13.5 13.5H2.5A1 1 0 0 1 1.5 12.5V3.5A1 1 0 0 1 2.5 2.5Z" fill="#3B3D42" stroke="#CED0D6" stroke-width="1"/><circle cx="6" cy="9" r="1.5" stroke="#CED0D6" stroke-width="1"/></svg>
<div style="position:absolute;left:488.5px;top:1171px;font-family:'Liberation Sans', sans-serif;font-size:27px;line-height:27px;font-weight:400;color:#DFE1E5;letter-spacing:0.3px;white-space:pre;">service</div>
<svg style="position:absolute;left:451.5px;top:1226.0px;" width="20" height="12.0" viewBox="0 0 20 12.0" fill="none" stroke-linecap="round" stroke-linejoin="round"><path d="M2 2L10.0 10.0L18 2" stroke="#A8ADB5" stroke-width="2"/></svg>
<svg style="position:absolute;left:488.0px;top:1216px;" width="32" height="32" viewBox="0 0 16 16" fill="none" stroke-linecap="round" stroke-linejoin="round"><path d="M2.5 2.5H6.2L8.2 4.5H13.5A1 1 0 0 1 14.5 5.5V12.5A1 1 0 0 1 13.5 13.5H2.5A1 1 0 0 1 1.5 12.5V3.5A1 1 0 0 1 2.5 2.5Z" fill="#3B3D42" stroke="#CED0D6" stroke-width="1"/><circle cx="6" cy="9" r="1.5" stroke="#CED0D6" stroke-width="1"/></svg>
<div style="position:absolute;left:526.5px;top:1219px;font-family:'Liberation Sans', sans-serif;font-size:27px;line-height:27px;font-weight:400;color:#DFE1E5;letter-spacing:0.3px;white-space:pre;">Impl</div>
<svg style="position:absolute;left:526.0px;top:1264px;" width="32" height="32" viewBox="0 0 16 16" fill="none" stroke-linecap="round" stroke-linejoin="round"><circle cx="8" cy="8" r="6.5" fill="#25324D" stroke="#548AF7" stroke-width="1"/><path d="M10.6 5.9A3.25 3.25 0 1 0 10.6 10.1" stroke="#548AF7" stroke-width="1"/></svg>
<div style="position:absolute;left:564.5px;top:1267px;font-family:'Liberation Sans', sans-serif;font-size:27px;line-height:27px;font-weight:400;color:#DFE1E5;letter-spacing:0.3px;white-space:pre;">BookServiceImpl</div>
<svg style="position:absolute;left:526.0px;top:1312px;" width="32" height="32" viewBox="0 0 16 16" fill="none" stroke-linecap="round" stroke-linejoin="round"><circle cx="8" cy="8" r="6.5" fill="#25324D" stroke="#548AF7" stroke-width="1"/><path d="M10.6 5.9A3.25 3.25 0 1 0 10.6 10.1" stroke="#548AF7" stroke-width="1"/></svg>
<div style="position:absolute;left:564.5px;top:1315px;font-family:'Liberation Sans', sans-serif;font-size:27px;line-height:27px;font-weight:400;color:#DFE1E5;letter-spacing:0.3px;white-space:pre;">UserServiceImpl</div>
<svg style="position:absolute;left:488.0px;top:1360px;" width="32" height="32" viewBox="0 0 16 16" fill="none" stroke-linecap="round" stroke-linejoin="round"><circle cx="8" cy="8" r="6.5" fill="#253627" stroke="#5FB865" stroke-width="1"/><path d="M6.5 4.8H9.5M6.5 11.2H9.5M8 4.8V11.2" stroke="#5FB865" stroke-width="1"/></svg>
<div style="position:absolute;left:526.5px;top:1363px;font-family:'Liberation Sans', sans-serif;font-size:27px;line-height:27px;font-weight:400;color:#DFE1E5;letter-spacing:0.3px;white-space:pre;">BookService</div>
<svg style="position:absolute;left:488.0px;top:1408px;" width="32" height="32" viewBox="0 0 16 16" fill="none" stroke-linecap="round" stroke-linejoin="round"><circle cx="8" cy="8" r="6.5" fill="#253627" stroke="#5FB865" stroke-width="1"/><path d="M6.5 4.8H9.5M6.5 11.2H9.5M8 4.8V11.2" stroke="#5FB865" stroke-width="1"/></svg>
<div style="position:absolute;left:526.5px;top:1411px;font-family:'Liberation Sans', sans-serif;font-size:27px;line-height:27px;font-weight:400;color:#DFE1E5;letter-spacing:0.3px;white-space:pre;">UserService</div>
<svg style="position:absolute;left:337.5px;top:1466.0px;" width="20" height="12.0" viewBox="0 0 20 12.0" fill="none" stroke-linecap="round" stroke-linejoin="round"><path d="M2 2L10.0 10.0L18 2" stroke="#A8ADB5" stroke-width="2"/></svg>
<svg style="position:absolute;left:374.0px;top:1456px;" width="32" height="32" viewBox="0 0 16 16" fill="none" stroke-linecap="round" stroke-linejoin="round"><path d="M14.5 9V5.5A1 1 0 0 0 13.5 4.5H8.2L6.2 2.5H2.5A1 1 0 0 0 1.5 3.5V12.5A1 1 0 0 0 2.5 13.5H8" fill="#3B3D42" stroke="#CED0D6" stroke-width="1"/><path d="M9.5 11H15M9.5 13H15M9.5 15H15" stroke="#F2C55C" stroke-width="1"/></svg>
<div style="position:absolute;left:412.5px;top:1459px;font-family:'Liberation Sans', sans-serif;font-size:27px;line-height:27px;font-weight:400;color:#DFE1E5;letter-spacing:0.3px;white-space:pre;">resources</div>
<svg style="position:absolute;left:379.5px;top:1510.0px;" width="12.0" height="20" viewBox="0 0 12.0 20" fill="none" stroke-linecap="round" stroke-linejoin="round"><path d="M2 2L10.0 10.0L2 18" stroke="#A8ADB5" stroke-width="2"/></svg>
<svg style="position:absolute;left:412.0px;top:1504px;" width="32" height="32" viewBox="0 0 16 16" fill="none" stroke-linecap="round" stroke-linejoin="round"><path d="M2.5 2.5H6.2L8.2 4.5H13.5A1 1 0 0 1 14.5 5.5V12.5A1 1 0 0 1 13.5 13.5H2.5A1 1 0 0 1 1.5 12.5V3.5A1 1 0 0 1 2.5 2.5Z" fill="#3B3D42" stroke="#CED0D6" stroke-width="1"/></svg>
<div style="position:absolute;left:450.5px;top:1507px;font-family:'Liberation Sans', sans-serif;font-size:27px;line-height:27px;font-weight:400;color:#DFE1E5;letter-spacing:0.3px;white-space:pre;">static</div>
<svg style="position:absolute;left:375.5px;top:1562.0px;" width="20" height="12.0" viewBox="0 0 20 12.0" fill="none" stroke-linecap="round" stroke-linejoin="round"><path d="M2 2L10.0 10.0L18 2" stroke="#A8ADB5" stroke-width="2"/></svg>
<svg style="position:absolute;left:412.0px;top:1552px;" width="32" height="32" viewBox="0 0 16 16" fill="none" stroke-linecap="round" stroke-linejoin="round"><path d="M2.5 2.5H6.2L8.2 4.5H13.5A1 1 0 0 1 14.5 5.5V12.5A1 1 0 0 1 13.5 13.5H2.5A1 1 0 0 1 1.5 12.5V3.5A1 1 0 0 1 2.5 2.5Z" fill="#3B3D42" stroke="#CED0D6" stroke-width="1"/></svg>
<div style="position:absolute;left:450.5px;top:1555px;font-family:'Liberation Sans', sans-serif;font-size:27px;line-height:27px;font-weight:400;color:#DFE1E5;letter-spacing:0.3px;white-space:pre;">templates</div>
<svg style="position:absolute;left:450.0px;top:1600px;" width="32" height="32" viewBox="0 0 16 16" fill="none" stroke-linecap="round" stroke-linejoin="round"><path d="M6 4.5L2 8.5L6 12.5M10 4.5L14 8.5L10 12.5" stroke="#5FB865" stroke-width="1"/></svg>
<div style="position:absolute;left:488.5px;top:1603px;font-family:'Liberation Sans', sans-serif;font-size:27px;line-height:27px;font-weight:400;color:#DFE1E5;letter-spacing:0.3px;white-space:pre;">add-book.html</div></div>
</div>
<div style="position:absolute;left:912px;top:246px;width:16px;height:969px;background:#3E4044;border-radius:8px;"></div>
<div style="position:absolute;left:200px;top:1657px;width:373px;height:16px;background:#3E4044;border-radius:8px;"></div>
<svg style="position:absolute;left:1064px;top:183px;" width="32" height="32" viewBox="0 0 16 16" fill="none" stroke-linecap="round" stroke-linejoin="round"><circle cx="8" cy="8" r="6.5" fill="#25324D" stroke="#548AF7" stroke-width="1"/><path d="M10.6 5.9A3.25 3.25 0 1 0 10.6 10.1" stroke="#548AF7" stroke-width="1"/></svg>
<div style="position:absolute;left:1106px;top:186px;font-family:'Liberation Sans', sans-serif;font-size:27px;line-height:27px;font-weight:400;color:#B4B7BD;letter-spacing:0.46px;white-space:pre;">StudentController.java</div>
<svg style="position:absolute;left:1466px;top:183px;" width="32" height="32" viewBox="0 0 16 16" fill="none" stroke-linecap="round" stroke-linejoin="round"><circle cx="8" cy="8" r="6.5" fill="#25324D" stroke="#548AF7" stroke-width="1"/><path d="M10.6 5.9A3.25 3.25 0 1 0 10.6 10.1" stroke="#548AF7" stroke-width="1"/></svg>
<div style="position:absolute;left:1508px;top:186px;font-family:'Liberation Sans', sans-serif;font-size:27px;line-height:27px;font-weight:400;color:#B4B7BD;letter-spacing:0.3px;white-space:pre;">Student.java</div>
<svg style="position:absolute;left:1748px;top:183px;" width="32" height="32" viewBox="0 0 16 16" fill="none" stroke-linecap="round" stroke-linejoin="round"><circle cx="8" cy="8" r="6.5" fill="#253627" stroke="#5FB865" stroke-width="1"/><path d="M6.5 4.8H9.5M6.5 11.2H9.5M8 4.8V11.2" stroke="#5FB865" stroke-width="1"/></svg>
<div style="position:absolute;left:1790px;top:186px;font-family:'Liberation Sans', sans-serif;font-size:27px;line-height:27px;font-weight:400;color:#B4B7BD;letter-spacing:0.18px;white-space:pre;">UserService.java</div>
<svg style="position:absolute;left:2081px;top:183px;" width="32" height="32" viewBox="0 0 16 16" fill="none" stroke-linecap="round" stroke-linejoin="round"><circle cx="8" cy="8" r="6.5" fill="#25324D" stroke="#548AF7" stroke-width="1"/><path d="M10.6 5.9A3.25 3.25 0 1 0 10.6 10.1" stroke="#548AF7" stroke-width="1"/></svg>
<div style="position:absolute;left:2123px;top:186px;font-family:'Liberation Sans', sans-serif;font-size:27px;line-height:27px;font-weight:400;color:#B4B7BD;letter-spacing:0.15px;white-space:pre;">UserServiceImpl.java</div>
<svg style="position:absolute;left:2468px;top:183px;" width="32" height="32" viewBox="0 0 16 16" fill="none" stroke-linecap="round" stroke-linejoin="round"><circle cx="8" cy="8" r="6.5" fill="#25324D" stroke="#548AF7" stroke-width="1"/><path d="M10.6 5.9A3.25 3.25 0 1 0 10.6 10.1" stroke="#548AF7" stroke-width="1"/></svg>
<div style="position:absolute;left:2510px;top:186px;font-family:'Liberation Sans', sans-serif;font-size:27px;line-height:27px;font-weight:400;color:#DFE1E5;letter-spacing:0.44px;white-space:pre;">MysqlListener.java</div>
<div style="position:absolute;left:934px;top:170px;width:60px;height:60px;overflow:hidden">
<div style="position:absolute;left:-9px;top:16px;font-family:'Liberation Sans', sans-serif;font-size:27px;line-height:27px;color:#BCBEC4;letter-spacing:0.55px;white-space:pre">java</div>
</div>
<div style="position:absolute;left:934px;top:170px;width:30px;height:60px;background:linear-gradient(90deg,#1D1E20 0%,rgba(29,30,32,0) 100%)"></div>
<div style="position:absolute;left:2444px;top:234px;width:356px;height:6px;background:#3574F0;border-radius:3px;"></div>
<div style="position:absolute;left:934px;top:238px;width:1996px;height:2px;background:#313338;border-radius:0px;"></div>
<div style="position:absolute;left:2444px;top:234px;width:356px;height:6px;background:#3574F0;border-radius:3px;"></div>
<svg style="position:absolute;left:2757px;top:187px;" width="24" height="24" viewBox="0 0 24 24" fill="none" stroke-linecap="round" stroke-linejoin="round"><path d="M5 5L19 19M19 5L5 19" stroke="#8C8F96" stroke-width="2.2"/></svg>
<svg style="position:absolute;left:2828.0px;top:191.0px;" width="24" height="14.0" viewBox="0 0 24 14.0" fill="none" stroke-linecap="round" stroke-linejoin="round"><path d="M2 2L12.0 12.0L22 2" stroke="#CED0D6" stroke-width="2.2"/></svg>
<div style="position:absolute;left:2889px;top:185px;width:6px;height:6px;border-radius:3px;background:#CED0D6"></div>
<div style="position:absolute;left:2889px;top:195px;width:6px;height:6px;border-radius:3px;background:#CED0D6"></div>
<div style="position:absolute;left:2889px;top:205px;width:6px;height:6px;border-radius:3px;background:#CED0D6"></div>
<svg style="position:absolute;left:2788px;top:252px;" width="28" height="26" viewBox="0 0 28 26" fill="none" stroke-linecap="round" stroke-linejoin="round"><path d="M14 2.5L26 23.5H2Z" fill="#D9A343" stroke="#D9A343" stroke-width="3" stroke-linejoin="round"/><path d="M14 9V16" stroke="#1D1E20" stroke-width="2.6"/><circle cx="14" cy="20" r="1.5" fill="#1D1E20"/></svg>
<div style="position:absolute;left:2820px;top:254px;font-family:'Liberation Sans', sans-serif;font-size:26px;line-height:26px;font-weight:400;color:#BCBEC4;letter-spacing:0px;white-space:pre;">2</div>
<svg style="position:absolute;left:2852px;top:258px;" width="24" height="16" viewBox="0 0 24 16" fill="none" stroke-linecap="round" stroke-linejoin="round"><path d="M3 12L12 4L21 12" stroke="#A8ADB5" stroke-width="2.2"/></svg>
<svg style="position:absolute;left:2894px;top:256px;" width="24" height="16" viewBox="0 0 24 16" fill="none" stroke-linecap="round" stroke-linejoin="round"><path d="M3 4L12 12L21 4" stroke="#A8ADB5" stroke-width="2.2"/></svg>
<div style="position:absolute;left:936px;top:1119px;width:1994px;height:44px;background:#26282C;border-radius:0px;"></div>
<div style="position:absolute;left:2907px;top:296px;width:17px;height:1328px;background:#38393B;border-radius:8px;"></div>
<div style="position:absolute;left:2902px;top:739px;width:28px;height:3px;background:#C9A04F;border-radius:0px;"></div>
<div style="position:absolute;left:2902px;top:1148px;width:28px;height:3px;background:#C9A04F;border-radius:0px;"></div>
<div style="position:absolute;left:1080px;top:240px;width:2px;height:1440px;background:#2E3034;border-radius:0px;"></div>
<div style="position:absolute;right:2626px;text-align:right;top:251.7px;font-family:'Liberation Mono', monospace;font-size:26px;line-height:26px;font-weight:400;color:#4B5059;letter-spacing:0px;white-space:pre;">1</div>
<div style="position:absolute;right:2626px;text-align:right;top:295.66999999999996px;font-family:'Liberation Mono', monospace;font-size:26px;line-height:26px;font-weight:400;color:#4B5059;letter-spacing:0px;white-space:pre;">2</div>
<div style="position:absolute;right:2626px;text-align:right;top:339.64px;font-family:'Liberation Mono', monospace;font-size:26px;line-height:26px;font-weight:400;color:#4B5059;letter-spacing:0px;white-space:pre;">3</div>
<div style="position:absolute;right:2626px;text-align:right;top:383.61px;font-family:'Liberation Mono', monospace;font-size:26px;line-height:26px;font-weight:400;color:#4B5059;letter-spacing:0px;white-space:pre;">4</div>
<div style="position:absolute;right:2626px;text-align:right;top:427.58px;font-family:'Liberation Mono', monospace;font-size:26px;line-height:26px;font-weight:400;color:#4B5059;letter-spacing:0px;white-space:pre;">5</div>
<div style="position:absolute;right:2626px;text-align:right;top:471.54999999999995px;font-family:'Liberation Mono', monospace;font-size:26px;line-height:26px;font-weight:400;color:#4B5059;letter-spacing:0px;white-space:pre;">6</div>
<div style="position:absolute;right:2626px;text-align:right;top:515.52px;font-family:'Liberation Mono', monospace;font-size:26px;line-height:26px;font-weight:400;color:#4B5059;letter-spacing:0px;white-space:pre;">7</div>
<div style="position:absolute;right:2626px;text-align:right;top:559.49px;font-family:'Liberation Mono', monospace;font-size:26px;line-height:26px;font-weight:400;color:#4B5059;letter-spacing:0px;white-space:pre;">8</div>
<div style="position:absolute;right:2626px;text-align:right;top:603.46px;font-family:'Liberation Mono', monospace;font-size:26px;line-height:26px;font-weight:400;color:#4B5059;letter-spacing:0px;white-space:pre;">9</div>
<div style="position:absolute;right:2626px;text-align:right;top:647.4300000000001px;font-family:'Liberation Mono', monospace;font-size:26px;line-height:26px;font-weight:400;color:#4B5059;letter-spacing:0px;white-space:pre;">10</div>
<div style="position:absolute;right:2626px;text-align:right;top:735.3699999999999px;font-family:'Liberation Mono', monospace;font-size:26px;line-height:26px;font-weight:400;color:#4B5059;letter-spacing:0px;white-space:pre;">11</div>
<div style="position:absolute;right:2626px;text-align:right;top:823.31px;font-family:'Liberation Mono', monospace;font-size:26px;line-height:26px;font-weight:400;color:#4B5059;letter-spacing:0px;white-space:pre;">12</div>
<div style="position:absolute;right:2626px;text-align:right;top:867.28px;font-family:'Liberation Mono', monospace;font-size:26px;line-height:26px;font-weight:400;color:#4B5059;letter-spacing:0px;white-space:pre;">13</div>
<div style="position:absolute;right:2626px;text-align:right;top:911.25px;font-family:'Liberation Mono', monospace;font-size:26px;line-height:26px;font-weight:400;color:#4B5059;letter-spacing:0px;white-space:pre;">14</div>
<div style="position:absolute;right:2626px;text-align:right;top:955.22px;font-family:'Liberation Mono', monospace;font-size:26px;line-height:26px;font-weight:400;color:#4B5059;letter-spacing:0px;white-space:pre;">15</div>
<div style="position:absolute;right:2626px;text-align:right;top:999.19px;font-family:'Liberation Mono', monospace;font-size:26px;line-height:26px;font-weight:400;color:#4B5059;letter-spacing:0px;white-space:pre;">16</div>
<div style="position:absolute;right:2626px;text-align:right;top:1043.16px;font-family:'Liberation Mono', monospace;font-size:26px;line-height:26px;font-weight:400;color:#4B5059;letter-spacing:0px;white-space:pre;">17</div>
<div style="position:absolute;right:2626px;text-align:right;top:1087.1299999999999px;font-family:'Liberation Mono', monospace;font-size:26px;line-height:26px;font-weight:400;color:#4B5059;letter-spacing:0px;white-space:pre;">18</div>
<div style="position:absolute;right:2626px;text-align:right;top:1131.1px;font-family:'Liberation Mono', monospace;font-size:26px;line-height:26px;font-weight:400;color:#A1A3AB;letter-spacing:0px;white-space:pre;">19</div>
<div style="position:absolute;right:2626px;text-align:right;top:1175.07px;font-family:'Liberation Mono', monospace;font-size:26px;line-height:26px;font-weight:400;color:#4B5059;letter-spacing:0px;white-space:pre;">20</div>
<div style="position:absolute;right:2626px;text-align:right;top:1219.04px;font-family:'Liberation Mono', monospace;font-size:26px;line-height:26px;font-weight:400;color:#4B5059;letter-spacing:0px;white-space:pre;">21</div>
<div style="position:absolute;right:2626px;text-align:right;top:1263.01px;font-family:'Liberation Mono', monospace;font-size:26px;line-height:26px;font-weight:400;color:#4B5059;letter-spacing:0px;white-space:pre;">22</div>
<div style="position:absolute;right:2626px;text-align:right;top:1306.98px;font-family:'Liberation Mono', monospace;font-size:26px;line-height:26px;font-weight:400;color:#4B5059;letter-spacing:0px;white-space:pre;">23</div>
<div style="position:absolute;right:2626px;text-align:right;top:1350.95px;font-family:'Liberation Mono', monospace;font-size:26px;line-height:26px;font-weight:400;color:#4B5059;letter-spacing:0px;white-space:pre;">24</div>
<div style="position:absolute;right:2626px;text-align:right;top:1394.92px;font-family:'Liberation Mono', monospace;font-size:26px;line-height:26px;font-weight:400;color:#4B5059;letter-spacing:0px;white-space:pre;">25</div>
<div style="position:absolute;right:2626px;text-align:right;top:1438.89px;font-family:'Liberation Mono', monospace;font-size:26px;line-height:26px;font-weight:400;color:#4B5059;letter-spacing:0px;white-space:pre;">26</div>
<div style="position:absolute;right:2626px;text-align:right;top:1482.86px;font-family:'Liberation Mono', monospace;font-size:26px;line-height:26px;font-weight:400;color:#4B5059;letter-spacing:0px;white-space:pre;">27</div>
<div style="position:absolute;left:1087px;top:692.4px;font-family:'Liberation Sans', sans-serif;font-size:24px;line-height:24px;font-weight:400;color:#6F737A;letter-spacing:0.6px;white-space:pre;">no usages</div>
<div style="position:absolute;left:1149px;top:780.3399999999999px;font-family:'Liberation Sans', sans-serif;font-size:24px;line-height:24px;font-weight:400;color:#6F737A;letter-spacing:0.6px;white-space:pre;">no usages</div>
<div style="position:absolute;left:1143px;top:899px;width:2px;height:352px;background:#2E3034;border-radius:0px;"></div>
<div style="position:absolute;left:1205px;top:943px;width:2px;height:176px;background:#2E3034;border-radius:0px;"></div>
<div style="position:absolute;left:1205px;top:1163px;width:2px;height:44px;background:#2E3034;border-radius:0px;"></div>
<div style="position:absolute;left:1268px;top:1031px;width:2px;height:44px;background:#2E3034;border-radius:0px;"></div>
<div style="position:absolute;left:1336.6px;top:1119px;width:15.6px;height:44px;background:#3B3D42;border-radius:0px;"></div>
<div style="position:absolute;left:1570.6px;top:1119px;width:15.6px;height:44px;background:#3B3D42;border-radius:0px;"></div>
<div style="position:absolute;left:1586.2px;top:1123px;width:16.1px;height:35px;background:#CED0D6;border-radius:0px;"></div>
<div style="position:absolute;left:1087.0px;top:251.7px;font-family:'Liberation Mono', monospace;font-size:26px;line-height:26px;color:#BCBEC4;white-space:pre"><span style="color:#CF8E6D">package</span> com.study.listener;</div>
<div style="position:absolute;left:1087.0px;top:339.64px;font-family:'Liberation Mono', monospace;font-size:26px;line-height:26px;color:#BCBEC4;white-space:pre"><span style="color:#CF8E6D">import</span> jakarta.servlet.ServletContextEvent;</div>
<div style="position:absolute;left:1087.0px;top:383.61px;font-family:'Liberation Mono', monospace;font-size:26px;line-height:26px;color:#BCBEC4;white-space:pre"><span style="color:#CF8E6D">import</span> jakarta.servlet.ServletContextListener;</div>
<div style="position:absolute;left:1087.0px;top:471.54999999999995px;font-family:'Liberation Mono', monospace;font-size:26px;line-height:26px;color:#BCBEC4;white-space:pre"><span style="color:#CF8E6D">import</span> java.sql.Driver;</div>
<div style="position:absolute;left:1087.0px;top:515.52px;font-family:'Liberation Mono', monospace;font-size:26px;line-height:26px;color:#BCBEC4;white-space:pre"><span style="color:#CF8E6D">import</span> java.sql.DriverManager;</div>
<div style="position:absolute;left:1087.0px;top:559.49px;font-family:'Liberation Mono', monospace;font-size:26px;line-height:26px;color:#BCBEC4;white-space:pre"><span style="color:#CF8E6D">import</span> java.sql.SQLException;</div>
<div style="position:absolute;left:1087.0px;top:603.46px;font-family:'Liberation Mono', monospace;font-size:26px;line-height:26px;color:#BCBEC4;white-space:pre"><span style="color:#CF8E6D">import</span> java.util.Enumeration;</div>
<div style="position:absolute;left:1087.0px;top:735.3699999999999px;font-family:'Liberation Mono', monospace;font-size:26px;line-height:26px;color:#BCBEC4;white-space:pre"><span style="color:#CF8E6D">public class</span> <span style="color:#868A91">MysqlListener</span> <span style="color:#CF8E6D">implements</span> ServletContextListener {</div>
<div style="position:absolute;left:1087.0px;top:823.31px;font-family:'Liberation Mono', monospace;font-size:26px;line-height:26px;color:#BCBEC4;white-space:pre">    <span style="color:#B3AE60">@Override</span></div>
<div style="position:absolute;left:1087.0px;top:867.28px;font-family:'Liberation Mono', monospace;font-size:26px;line-height:26px;color:#BCBEC4;white-space:pre">    <span style="color:#CF8E6D">public void</span> <span style="color:#56A8F5">contextDestroyed</span>(ServletContextEvent sce) {</div>
<div style="position:absolute;left:1087.0px;top:911.25px;font-family:'Liberation Mono', monospace;font-size:26px;line-height:26px;color:#BCBEC4;white-space:pre">        <span style="color:#CF8E6D">try</span>{</div>
<div style="position:absolute;left:1087.0px;top:955.22px;font-family:'Liberation Mono', monospace;font-size:26px;line-height:26px;color:#BCBEC4;white-space:pre">            Enumeration&lt;Driver&gt; drivers = DriverManager.<span style="font-style:italic">getDrivers</span>();</div>
<div style="position:absolute;left:1087.0px;top:999.19px;font-family:'Liberation Mono', monospace;font-size:26px;line-height:26px;color:#BCBEC4;white-space:pre">            <span style="color:#CF8E6D">while</span> (drivers.hasMoreElements()){</div>
<div style="position:absolute;left:1087.0px;top:1043.16px;font-family:'Liberation Mono', monospace;font-size:26px;line-height:26px;color:#BCBEC4;white-space:pre">                DriverManager.<span style="font-style:italic">deregisterDriver</span>(drivers.nextElement());</div>
<div style="position:absolute;left:1087.0px;top:1087.1299999999999px;font-family:'Liberation Mono', monospace;font-size:26px;line-height:26px;color:#BCBEC4;white-space:pre">            }</div>
<div style="position:absolute;left:1087.0px;top:1131.1px;font-family:'Liberation Mono', monospace;font-size:26px;line-height:26px;color:#BCBEC4;white-space:pre">        } <span style="color:#CF8E6D">catch</span> (SQLException e)<span style="color:#1D1E20">{</span></div>
<div style="position:absolute;left:1087.0px;top:1175.07px;font-family:'Liberation Mono', monospace;font-size:26px;line-height:26px;color:#BCBEC4;white-space:pre">            e.printStackTrace();</div>
<div style="position:absolute;left:1087.0px;top:1219.04px;font-family:'Liberation Mono', monospace;font-size:26px;line-height:26px;color:#BCBEC4;white-space:pre">        }</div>
<div style="position:absolute;left:1087.0px;top:1263.01px;font-family:'Liberation Mono', monospace;font-size:26px;line-height:26px;color:#BCBEC4;white-space:pre">    }</div>
<div style="position:absolute;left:1087.0px;top:1438.89px;font-family:'Liberation Mono', monospace;font-size:26px;line-height:26px;color:#BCBEC4;white-space:pre">}</div>
<svg style="position:absolute;left:1305.4px;top:1199px;" width="236" height="8" viewBox="0 0 236 8" fill="none" stroke-linecap="round" stroke-linejoin="round"><polyline points="0.0 2 4.0 6 8.0 2 12.0 6 16.0 2 20.0 6 24.0 2 28.0 6 32.0 2 36.0 6 40.0 2 44.0 6 48.0 2 52.0 6 56.0 2 60.0 6 64.0 2 68.0 6 72.0 2 76.0 6 80.0 2 84.0 6 88.0 2 92.0 6 96.0 2 100.0 6 104.0 2 108.0 6 112.0 2 116.0 6 120.0 2 124.0 6 128.0 2 132.0 6 136.0 2 140.0 6 144.0 2 148.0 6 152.0 2 156.0 6 160.0 2 164.0 6 168.0 2 172.0 6 176.0 2 180.0 6 184.0 2 188.0 6 192.0 2 196.0 6 200.0 2 204.0 6 208.0 2 212.0 6 216.0 2 220.0 6 224.0 2 228.0 6 232.0 2" stroke="#C9A04F" stroke-width="1.6" fill="none"/></svg>
<svg style="position:absolute;left:1004px;top:853px;" width="40" height="40" viewBox="0 0 40 40" fill="none" stroke-linecap="round" stroke-linejoin="round"><circle cx="14.6" cy="25" r="10" fill="#1F2A45"/><path d="M24.34 28.35A10.3 10.3 0 1 1 19.59 15.99" stroke="#548AF7" stroke-width="2.2"/><circle cx="14.6" cy="25" r="5.3" stroke="#548AF7" stroke-width="2.2"/><path d="M27 27V12M22.5 16.5L27 12L31.5 16.5" stroke="#E55757" stroke-width="2.4" stroke-linecap="butt"/></svg>
<svg style="position:absolute;left:1100px;top:1123px;" width="28" height="36" viewBox="0 0 28 36" fill="none" stroke-linecap="round" stroke-linejoin="round"><path d="M14 4Q23 4 23 13Q23 18 19 22V25H9V22Q5 18 5 13Q5 4 14 4Z" fill="#F2C55C"/><path d="M9 28.5H19M10 32H18" stroke="#CED0D6" stroke-width="2.2"/></svg>
<div style="position:absolute;left:2957px;top:186px;font-family:'Liberation Sans', sans-serif;font-size:26px;line-height:26px;font-weight:700;color:#DFE1E5;letter-spacing:0.2px;white-space:pre;">Maven</div>
<div style="position:absolute;left:2932px;top:238px;width:496px;height:2px;background:#1C1D1F;border-radius:0px;"></div>
<svg style="position:absolute;left:2952px;top:256px;" width="40" height="32" viewBox="0 0 40 32" fill="none" stroke-linecap="round" stroke-linejoin="round"><path d="M31 10Q27 4 20 4Q10 4 7 14M9 22Q13 28 20 28Q30 28 33 18" stroke="#CED0D6" stroke-width="2.4"/><path d="M4 10L7.5 15L12 11M36 22L32.5 17L28 21" stroke="#CED0D6" stroke-width="2.4"/></svg>
<svg style="position:absolute;left:3006px;top:256px;" width="40" height="36" viewBox="0 0 40 36" fill="none" stroke-linecap="round" stroke-linejoin="round"><path d="M18 28H7Q5 28 5 26V7Q5 5 7 5H13L17 9H28Q30 9 30 11V15" stroke="#CED0D6" stroke-width="2.4"/><path d="M21 22Q21 16 27.5 16Q34 16 34 22M34 26Q34 32 27.5 32Q21 32 21 26" stroke="#548AF7" stroke-width="2.4"/><path d="M19.5 18.5L21 22.5L24.5 21M35.5 29.5L34 25.5L30.5 27" stroke="#548AF7" stroke-width="2.4"/></svg>
<svg style="position:absolute;left:3060px;top:254px;" width="40" height="40" viewBox="0 0 40 40" fill="none" stroke-linecap="round" stroke-linejoin="round"><path d="M15 6V22M9 16L15 22L21 16M5 19V26H25V19" stroke="#CED0D6" stroke-width="2.4"/><path d="M34 27V36H25Z" fill="#CED0D6"/></svg>
<div style="position:absolute;left:3108px;top:252px;width:2px;height:40px;background:#43454A;border-radius:0px;"></div>
<svg style="position:absolute;left:3124px;top:254px;" width="36" height="36" viewBox="0 0 36 36" fill="none" stroke-linecap="round" stroke-linejoin="round"><path d="M18 4V30M5 17H31" stroke="#CED0D6" stroke-width="2.4"/></svg>
<div style="position:absolute;left:3174px;top:252px;width:2px;height:40px;background:#43454A;border-radius:0px;"></div>
<svg style="position:absolute;left:3193px;top:255px;" width="32" height="34" viewBox="0 0 32 34" fill="none" stroke-linecap="round" stroke-linejoin="round"><path d="M6 6.5Q6 4 8.2 5.2L26.5 15Q28.5 17 26.5 19L8.2 28.8Q6 30 6 27.5Z" fill="#1F2B21" stroke="#5FB865" stroke-width="2.4"/></svg>
<svg style="position:absolute;left:3242px;top:256px;" width="36" height="32" viewBox="0 0 36 32" fill="none" stroke-linecap="round" stroke-linejoin="round"><rect x="5" y="4" width="26" height="24" rx="4" stroke="#CED0D6" stroke-width="2.4"/><path d="M5 11H31" stroke="#CED0D6" stroke-width="2.4"/><path d="M11 15.5V24L18 19.7Z" stroke="#CED0D6" stroke-width="2.2"/></svg>
<svg style="position:absolute;left:3292px;top:254px;" width="40" height="36" viewBox="0 0 40 36" fill="none" stroke-linecap="round" stroke-linejoin="round"><path d="M10 11Q5 14 5 20Q5 27 12 27H24M31 25Q36 23 36 18Q36 13 30 12Q29 5 21 5Q17 5 14 8" stroke="#CED0D6" stroke-width="2.4"/><path d="M8 3L33 30" stroke="#CED0D6" stroke-width="2.4"/></svg>
<svg style="position:absolute;left:3389.0px;top:262.0px;" width="12.0" height="20" viewBox="0 0 12.0 20" fill="none" stroke-linecap="round" stroke-linejoin="round"><path d="M2 2L10.0 10.0L2 18" stroke="#A8ADB5" stroke-width="2"/></svg>
<div style="position:absolute;left:2956px;top:698px;width:448px;height:48px;background:#393B40;border-radius:8px;"></div>
<svg style="position:absolute;left:2962.0px;top:333.0px;" width="20" height="12.0" viewBox="0 0 20 12.0" fill="none" stroke-linecap="round" stroke-linejoin="round"><path d="M2 2L10.0 10.0L18 2" stroke="#A8ADB5" stroke-width="2"/></svg>
<div style="position:absolute;left:2998px;top:319px;font-family:'Liberation Sans', sans-serif;font-size:34px;line-height:34px;font-weight:400;color:#548AF7;letter-spacing:0px;white-space:pre;font-style:italic">m</div>
<div style="position:absolute;left:3037px;top:326px;font-family:'Liberation Sans', sans-serif;font-size:27px;line-height:27px;font-weight:400;color:#DFE1E5;letter-spacing:0.3px;white-space:pre;">BookManagement</div>
<svg style="position:absolute;left:3000.0px;top:381.0px;" width="20" height="12.0" viewBox="0 0 20 12.0" fill="none" stroke-linecap="round" stroke-linejoin="round"><path d="M2 2L10.0 10.0L18 2" stroke="#A8ADB5" stroke-width="2"/></svg>
<svg style="position:absolute;left:3036px;top:371px;" width="32" height="32" viewBox="0 0 16 16" fill="none" stroke-linecap="round" stroke-linejoin="round"><path d="M14.5 8V5.5A1 1 0 0 0 13.5 4.5H8.2L6.2 2.5H2.5A1 1 0 0 0 1.5 3.5V12.5A1 1 0 0 0 2.5 13.5H7" fill="#3B3D42" stroke="#CED0D6" stroke-width="1"/><circle cx="11.5" cy="12" r="4.3" fill="#27282A"/></svg>
<svg style="position:absolute;left:3049.5px;top:385.5px;" width="19.0" height="19.0" viewBox="0 0 19.0 19.0" fill="none" stroke-linecap="round" stroke-linejoin="round"><path d="M9.50 3.00L9.84 3.01L10.18 3.04L10.51 3.12L10.74 3.65L10.91 4.23L11.02 4.81L11.15 5.21L11.37 5.30L11.59 5.40L11.80 5.52L12.01 5.64L12.20 5.78L12.39 5.93L12.80 5.84L13.36 5.64L13.95 5.50L14.52 5.43L14.76 5.68L14.95 5.96L15.13 6.25L15.29 6.55L15.44 6.86L15.53 7.18L15.19 7.65L14.77 8.09L14.32 8.48L14.04 8.78L14.07 9.02L14.09 9.26L14.10 9.50L14.09 9.74L14.07 9.98L14.04 10.22L14.32 10.52L14.77 10.91L15.19 11.35L15.53 11.82L15.44 12.14L15.29 12.45L15.13 12.75L14.95 13.04L14.76 13.32L14.52 13.57L13.95 13.50L13.36 13.36L12.80 13.16L12.39 13.07L12.20 13.22L12.01 13.36L11.80 13.48L11.59 13.60L11.37 13.70L11.15 13.79L11.02 14.19L10.91 14.77L10.74 15.35L10.51 15.88L10.18 15.96L9.84 15.99L9.50 16.00L9.16 15.99L8.82 15.96L8.49 15.88L8.26 15.35L8.09 14.77L7.98 14.19L7.85 13.79L7.63 13.70L7.41 13.60L7.20 13.48L6.99 13.36L6.80 13.22L6.61 13.07L6.20 13.16L5.64 13.36L5.05 13.50L4.48 13.57L4.24 13.32L4.05 13.04L3.87 12.75L3.71 12.45L3.56 12.14L3.47 11.82L3.81 11.35L4.23 10.91L4.68 10.52L4.96 10.22L4.93 9.98L4.91 9.74L4.90 9.50L4.91 9.26L4.93 9.02L4.96 8.78L4.68 8.48L4.23 8.09L3.81 7.65L3.47 7.18L3.56 6.86L3.71 6.55L3.87 6.25L4.05 5.96L4.24 5.68L4.48 5.43L5.05 5.50L5.64 5.64L6.20 5.84L6.61 5.93L6.80 5.78L6.99 5.64L7.20 5.52L7.41 5.40L7.63 5.30L7.85 5.21L7.98 4.81L8.09 4.23L8.26 3.65L8.49 3.12L8.82 3.04L9.16 3.01Z" stroke="#548AF7" stroke-width="1.8"/><circle cx="9.5" cy="9.5" r="1.8" stroke="#548AF7" stroke-width="1.8"/></svg>
<div style="position:absolute;left:3074px;top:374px;font-family:'Liberation Sans', sans-serif;font-size:27px;line-height:27px;font-weight:400;color:#DFE1E5;letter-spacing:0.3px;white-space:pre;">Lifecycle</div>
<svg style="position:absolute;left:3073px;top:419px;" width="32" height="32" viewBox="0 0 16 16" fill="none" stroke-linecap="round" stroke-linejoin="round"><path d="M8.00 1.70L9.23 1.82L9.88 3.47L10.72 3.93L12.45 3.55L13.24 4.50L12.53 6.12L12.81 7.04L14.30 8.00L14.18 9.23L12.53 9.88L12.07 10.72L12.45 12.45L11.50 13.24L9.88 12.53L8.96 12.81L8.00 14.30L6.77 14.18L6.12 12.53L5.28 12.07L3.55 12.45L2.76 11.50L3.47 9.88L3.19 8.96L1.70 8.00L1.82 6.77L3.47 6.12L3.93 5.28L3.55 3.55L4.50 2.76L6.12 3.47L7.04 3.19Z" stroke="#CED0D6" stroke-width="0.9"/><circle cx="8" cy="8" r="2.2" stroke="#CED0D6" stroke-width="0.9"/></svg>
<div style="position:absolute;left:3112px;top:422px;font-family:'Liberation Sans', sans-serif;font-size:27px;line-height:27px;font-weight:400;color:#DFE1E5;letter-spacing:0.3px;white-space:pre;">clean</div>
<svg style="position:absolute;left:3073px;top:467px;" width="32" height="32" viewBox="0 0 16 16" fill="none" stroke-linecap="round" stroke-linejoin="round"><path d="M8.00 1.70L9.23 1.82L9.88 3.47L10.72 3.93L12.45 3.55L13.24 4.50L12.53 6.12L12.81 7.04L14.30 8.00L14.18 9.23L12.53 9.88L12.07 10.72L12.45 12.45L11.50 13.24L9.88 12.53L8.96 12.81L8.00 14.30L6.77 14.18L6.12 12.53L5.28 12.07L3.55 12.45L2.76 11.50L3.47 9.88L3.19 8.96L1.70 8.00L1.82 6.77L3.47 6.12L3.93 5.28L3.55 3.55L4.50 2.76L6.12 3.47L7.04 3.19Z" stroke="#CED0D6" stroke-width="0.9"/><circle cx="8" cy="8" r="2.2" stroke="#CED0D6" stroke-width="0.9"/></svg>
<div style="position:absolute;left:3112px;top:470px;font-family:'Liberation Sans', sans-serif;font-size:27px;line-height:27px;font-weight:400;color:#DFE1E5;letter-spacing:0.3px;white-space:pre;">validate</div>
<svg style="position:absolute;left:3073px;top:515px;" width="32" height="32" viewBox="0 0 16 16" fill="none" stroke-linecap="round" stroke-linejoin="round"><path d="M8.00 1.70L9.23 1.82L9.88 3.47L10.72 3.93L12.45 3.55L13.24 4.50L12.53 6.12L12.81 7.04L14.30 8.00L14.18 9.23L12.53 9.88L12.07 10.72L12.45 12.45L11.50 13.24L9.88 12.53L8.96 12.81L8.00 14.30L6.77 14.18L6.12 12.53L5.28 12.07L3.55 12.45L2.76 11.50L3.47 9.88L3.19 8.96L1.70 8.00L1.82 6.77L3.47 6.12L3.93 5.28L3.55 3.55L4.50 2.76L6.12 3.47L7.04 3.19Z" stroke="#CED0D6" stroke-width="0.9"/><circle cx="8" cy="8" r="2.2" stroke="#CED0D6" stroke-width="0.9"/></svg>
<div style="position:absolute;left:3112px;top:518px;font-family:'Liberation Sans', sans-serif;font-size:27px;line-height:27px;font-weight:400;color:#DFE1E5;letter-spacing:0.3px;white-space:pre;">compile</div>
<svg style="position:absolute;left:3073px;top:563px;" width="32" height="32" viewBox="0 0 16 16" fill="none" stroke-linecap="round" stroke-linejoin="round"><path d="M8.00 1.70L9.23 1.82L9.88 3.47L10.72 3.93L12.45 3.55L13.24 4.50L12.53 6.12L12.81 7.04L14.30 8.00L14.18 9.23L12.53 9.88L12.07 10.72L12.45 12.45L11.50 13.24L9.88 12.53L8.96 12.81L8.00 14.30L6.77 14.18L6.12 12.53L5.28 12.07L3.55 12.45L2.76 11.50L3.47 9.88L3.19 8.96L1.70 8.00L1.82 6.77L3.47 6.12L3.93 5.28L3.55 3.55L4.50 2.76L6.12 3.47L7.04 3.19Z" stroke="#CED0D6" stroke-width="0.9"/><circle cx="8" cy="8" r="2.2" stroke="#CED0D6" stroke-width="0.9"/></svg>
<div style="position:absolute;left:3112px;top:566px;font-family:'Liberation Sans', sans-serif;font-size:27px;line-height:27px;font-weight:400;color:#DFE1E5;letter-spacing:0.3px;white-space:pre;">test</div>
<svg style="position:absolute;left:3073px;top:611px;" width="32" height="32" viewBox="0 0 16 16" fill="none" stroke-linecap="round" stroke-linejoin="round"><path d="M8.00 1.70L9.23 1.82L9.88 3.47L10.72 3.93L12.45 3.55L13.24 4.50L12.53 6.12L12.81 7.04L14.30 8.00L14.18 9.23L12.53 9.88L12.07 10.72L12.45 12.45L11.50 13.24L9.88 12.53L8.96 12.81L8.00 14.30L6.77 14.18L6.12 12.53L5.28 12.07L3.55 12.45L2.76 11.50L3.47 9.88L3.19 8.96L1.70 8.00L1.82 6.77L3.47 6.12L3.93 5.28L3.55 3.55L4.50 2.76L6.12 3.47L7.04 3.19Z" stroke="#CED0D6" stroke-width="0.9"/><circle cx="8" cy="8" r="2.2" stroke="#CED0D6" stroke-width="0.9"/></svg>
<div style="position:absolute;left:3112px;top:614px;font-family:'Liberation Sans', sans-serif;font-size:27px;line-height:27px;font-weight:400;color:#DFE1E5;letter-spacing:0.3px;white-space:pre;">package</div>
<svg style="position:absolute;left:3073px;top:659px;" width="32" height="32" viewBox="0 0 16 16" fill="none" stroke-linecap="round" stroke-linejoin="round"><path d="M8.00 1.70L9.23 1.82L9.88 3.47L10.72 3.93L12.45 3.55L13.24 4.50L12.53 6.12L12.81 7.04L14.30 8.00L14.18 9.23L12.53 9.88L12.07 10.72L12.45 12.45L11.50 13.24L9.88 12.53L8.96 12.81L8.00 14.30L6.77 14.18L6.12 12.53L5.28 12.07L3.55 12.45L2.76 11.50L3.47 9.88L3.19 8.96L1.70 8.00L1.82 6.77L3.47 6.12L3.93 5.28L3.55 3.55L4.50 2.76L6.12 3.47L7.04 3.19Z" stroke="#CED0D6" stroke-width="0.9"/><circle cx="8" cy="8" r="2.2" stroke="#CED0D6" stroke-width="0.9"/></svg>
<div style="position:absolute;left:3112px;top:662px;font-family:'Liberation Sans', sans-serif;font-size:27px;line-height:27px;font-weight:400;color:#DFE1E5;letter-spacing:0.3px;white-space:pre;">verify</div>
<svg style="position:absolute;left:3073px;top:707px;" width="32" height="32" viewBox="0 0 16 16" fill="none" stroke-linecap="round" stroke-linejoin="round"><path d="M8.00 1.70L9.23 1.82L9.88 3.47L10.72 3.93L12.45 3.55L13.24 4.50L12.53 6.12L12.81 7.04L14.30 8.00L14.18 9.23L12.53 9.88L12.07 10.72L12.45 12.45L11.50 13.24L9.88 12.53L8.96 12.81L8.00 14.30L6.77 14.18L6.12 12.53L5.28 12.07L3.55 12.45L2.76 11.50L3.47 9.88L3.19 8.96L1.70 8.00L1.82 6.77L3.47 6.12L3.93 5.28L3.55 3.55L4.50 2.76L6.12 3.47L7.04 3.19Z" stroke="#CED0D6" stroke-width="0.9"/><circle cx="8" cy="8" r="2.2" stroke="#CED0D6" stroke-width="0.9"/></svg>
<div style="position:absolute;left:3112px;top:710px;font-family:'Liberation Sans', sans-serif;font-size:27px;line-height:27px;font-weight:400;color:#DFE1E5;letter-spacing:0.3px;white-space:pre;">install</div>
<svg style="position:absolute;left:3073px;top:755px;" width="32" height="32" viewBox="0 0 16 16" fill="none" stroke-linecap="round" stroke-linejoin="round"><path d="M8.00 1.70L9.23 1.82L9.88 3.47L10.72 3.93L12.45 3.55L13.24 4.50L12.53 6.12L12.81 7.04L14.30 8.00L14.18 9.23L12.53 9.88L12.07 10.72L12.45 12.45L11.50 13.24L9.88 12.53L8.96 12.81L8.00 14.30L6.77 14.18L6.12 12.53L5.28 12.07L3.55 12.45L2.76 11.50L3.47 9.88L3.19 8.96L1.70 8.00L1.82 6.77L3.47 6.12L3.93 5.28L3.55 3.55L4.50 2.76L6.12 3.47L7.04 3.19Z" stroke="#CED0D6" stroke-width="0.9"/><circle cx="8" cy="8" r="2.2" stroke="#CED0D6" stroke-width="0.9"/></svg>
<div style="position:absolute;left:3112px;top:758px;font-family:'Liberation Sans', sans-serif;font-size:27px;line-height:27px;font-weight:400;color:#DFE1E5;letter-spacing:0.3px;white-space:pre;">site</div>
<svg style="position:absolute;left:3073px;top:803px;" width="32" height="32" viewBox="0 0 16 16" fill="none" stroke-linecap="round" stroke-linejoin="round"><path d="M8.00 1.70L9.23 1.82L9.88 3.47L10.72 3.93L12.45 3.55L13.24 4.50L12.53 6.12L12.81 7.04L14.30 8.00L14.18 9.23L12.53 9.88L12.07 10.72L12.45 12.45L11.50 13.24L9.88 12.53L8.96 12.81L8.00 14.30L6.77 14.18L6.12 12.53L5.28 12.07L3.55 12.45L2.76 11.50L3.47 9.88L3.19 8.96L1.70 8.00L1.82 6.77L3.47 6.12L3.93 5.28L3.55 3.55L4.50 2.76L6.12 3.47L7.04 3.19Z" stroke="#CED0D6" stroke-width="0.9"/><circle cx="8" cy="8" r="2.2" stroke="#CED0D6" stroke-width="0.9"/></svg>
<div style="position:absolute;left:3112px;top:806px;font-family:'Liberation Sans', sans-serif;font-size:27px;line-height:27px;font-weight:400;color:#DFE1E5;letter-spacing:0.3px;white-space:pre;">deploy</div>
<svg style="position:absolute;left:3004.0px;top:857.0px;" width="12.0" height="20" viewBox="0 0 12.0 20" fill="none" stroke-linecap="round" stroke-linejoin="round"><path d="M2 2L10.0 10.0L2 18" stroke="#A8ADB5" stroke-width="2"/></svg>
<svg style="position:absolute;left:3036px;top:851px;" width="32" height="32" viewBox="0 0 16 16" fill="none" stroke-linecap="round" stroke-linejoin="round"><path d="M14.5 8V5.5A1 1 0 0 0 13.5 4.5H8.2L6.2 2.5H2.5A1 1 0 0 0 1.5 3.5V12.5A1 1 0 0 0 2.5 13.5H7" fill="#3B3D42" stroke="#CED0D6" stroke-width="1"/><circle cx="11.5" cy="12" r="4.3" fill="#27282A"/></svg>
<svg style="position:absolute;left:3049.5px;top:865.5px;" width="19.0" height="19.0" viewBox="0 0 19.0 19.0" fill="none" stroke-linecap="round" stroke-linejoin="round"><path d="M9.50 3.00L9.84 3.01L10.18 3.04L10.51 3.12L10.74 3.65L10.91 4.23L11.02 4.81L11.15 5.21L11.37 5.30L11.59 5.40L11.80 5.52L12.01 5.64L12.20 5.78L12.39 5.93L12.80 5.84L13.36 5.64L13.95 5.50L14.52 5.43L14.76 5.68L14.95 5.96L15.13 6.25L15.29 6.55L15.44 6.86L15.53 7.18L15.19 7.65L14.77 8.09L14.32 8.48L14.04 8.78L14.07 9.02L14.09 9.26L14.10 9.50L14.09 9.74L14.07 9.98L14.04 10.22L14.32 10.52L14.77 10.91L15.19 11.35L15.53 11.82L15.44 12.14L15.29 12.45L15.13 12.75L14.95 13.04L14.76 13.32L14.52 13.57L13.95 13.50L13.36 13.36L12.80 13.16L12.39 13.07L12.20 13.22L12.01 13.36L11.80 13.48L11.59 13.60L11.37 13.70L11.15 13.79L11.02 14.19L10.91 14.77L10.74 15.35L10.51 15.88L10.18 15.96L9.84 15.99L9.50 16.00L9.16 15.99L8.82 15.96L8.49 15.88L8.26 15.35L8.09 14.77L7.98 14.19L7.85 13.79L7.63 13.70L7.41 13.60L7.20 13.48L6.99 13.36L6.80 13.22L6.61 13.07L6.20 13.16L5.64 13.36L5.05 13.50L4.48 13.57L4.24 13.32L4.05 13.04L3.87 12.75L3.71 12.45L3.56 12.14L3.47 11.82L3.81 11.35L4.23 10.91L4.68 10.52L4.96 10.22L4.93 9.98L4.91 9.74L4.90 9.50L4.91 9.26L4.93 9.02L4.96 8.78L4.68 8.48L4.23 8.09L3.81 7.65L3.47 7.18L3.56 6.86L3.71 6.55L3.87 6.25L4.05 5.96L4.24 5.68L4.48 5.43L5.05 5.50L5.64 5.64L6.20 5.84L6.61 5.93L6.80 5.78L6.99 5.64L7.20 5.52L7.41 5.40L7.63 5.30L7.85 5.21L7.98 4.81L8.09 4.23L8.26 3.65L8.49 3.12L8.82 3.04L9.16 3.01Z" stroke="#548AF7" stroke-width="1.8"/><circle cx="9.5" cy="9.5" r="1.8" stroke="#548AF7" stroke-width="1.8"/></svg>
<div style="position:absolute;left:3074px;top:854px;font-family:'Liberation Sans', sans-serif;font-size:27px;line-height:27px;font-weight:400;color:#DFE1E5;letter-spacing:0.3px;white-space:pre;">Plugins</div>
<svg style="position:absolute;left:3004.0px;top:905.0px;" width="12.0" height="20" viewBox="0 0 12.0 20" fill="none" stroke-linecap="round" stroke-linejoin="round"><path d="M2 2L10.0 10.0L2 18" stroke="#A8ADB5" stroke-width="2"/></svg>
<svg style="position:absolute;left:3036px;top:899px;" width="32" height="32" viewBox="0 0 16 16" fill="none" stroke-linecap="round" stroke-linejoin="round"><path d="M14.5 8V5.5A1 1 0 0 0 13.5 4.5H8.2L6.2 2.5H2.5A1 1 0 0 0 1.5 3.5V12.5A1 1 0 0 0 2.5 13.5H7" fill="#3B3D42" stroke="#CED0D6" stroke-width="1"/><rect x="8" y="8" width="8" height="8" fill="#27282A"/><path d="M9 15.5V11M11.5 15.5V9.5M14 15.5V12M8.5 15.5H15" stroke="#548AF7" stroke-width="1"/></svg>
<div style="position:absolute;left:3074px;top:902px;font-family:'Liberation Sans', sans-serif;font-size:27px;line-height:27px;font-weight:400;color:#DFE1E5;letter-spacing:0.3px;white-space:pre;">Dependencies</div>
<div style="position:absolute;left:218px;top:1710px;font-family:'Liberation Sans', sans-serif;font-size:26px;line-height:26px;font-weight:700;color:#DFE1E5;letter-spacing:0.45px;white-space:pre;">Services</div>
<div style="position:absolute;left:194px;top:1761px;width:3234px;height:2px;background:#1C1D1F;border-radius:0px;"></div>
<svg style="position:absolute;left:206px;top:1782px;" width="28" height="32" viewBox="0 0 28 32" fill="none" stroke-linecap="round" stroke-linejoin="round"><path d="M6 12L14 4L22 12M6 20L14 28L22 20" stroke="#CED0D6" stroke-width="2"/></svg>
<svg style="position:absolute;left:258px;top:1782px;" width="28" height="32" viewBox="0 0 28 32" fill="none" stroke-linecap="round" stroke-linejoin="round"><path d="M6 4L14 12L22 4M6 28L14 20L22 28" stroke="#CED0D6" stroke-width="2"/></svg>
<div style="position:absolute;left:304px;top:1779px;width:2px;height:39px;background:#43454A;border-radius:0px;"></div>
<svg style="position:absolute;left:320px;top:1784px;" width="38" height="28" viewBox="0 0 38 28" fill="none" stroke-linecap="round" stroke-linejoin="round"><path d="M3 13Q11 3 18 3Q25 3 33 13Q25 24 18 24Q11 24 3 13Z" stroke="#CED0D6" stroke-width="2"/><circle cx="18" cy="13" r="5" stroke="#CED0D6" stroke-width="2"/></svg>
<svg style="position:absolute;left:347px;top:1807px;" width="10" height="10" viewBox="0 0 10 10" fill="none" stroke-linecap="round" stroke-linejoin="round"><path d="M9 1V9H1Z" fill="#CED0D6"/></svg>
<svg style="position:absolute;left:374px;top:1784px;" width="32" height="30" viewBox="0 0 32 30" fill="none" stroke-linecap="round" stroke-linejoin="round"><path d="M4 4H28L19 15V25L13 28V15Z" stroke="#CED0D6" stroke-width="2"/></svg>
<svg style="position:absolute;left:399px;top:1807px;" width="10" height="10" viewBox="0 0 10 10" fill="none" stroke-linecap="round" stroke-linejoin="round"><path d="M9 1V9H1Z" fill="#CED0D6"/></svg>
<svg style="position:absolute;left:424px;top:1778px;" width="40" height="34" viewBox="0 0 40 34" fill="none" stroke-linecap="round" stroke-linejoin="round"><path d="M16 8H9Q6 8 6 11V24Q6 27 9 27H23Q26 27 26 24V21" stroke="#CED0D6" stroke-width="2"/><path d="M27 2V15M20.5 8.5H33.5" stroke="#CED0D6" stroke-width="2"/></svg>
<div style="position:absolute;left:474px;top:1779px;width:2px;height:39px;background:#43454A;border-radius:0px;"></div>
<svg style="position:absolute;left:490px;top:1780px;" width="34" height="34" viewBox="0 0 34 34" fill="none" stroke-linecap="round" stroke-linejoin="round"><path d="M17 4V30M4 17H30" stroke="#CED0D6" stroke-width="2.2"/></svg>
<svg style="position:absolute;left:517px;top:1807px;" width="10" height="10" viewBox="0 0 10 10" fill="none" stroke-linecap="round" stroke-linejoin="round"><path d="M9 1V9H1Z" fill="#CED0D6"/></svg>
<div style="position:absolute;left:194px;top:1831px;width:971px;height:2px;background:#1C1D1F;border-radius:0px;"></div>
<div style="position:absolute;left:1164px;top:1763px;width:2px;height:663px;background:#1C1D1F;border-radius:0px;"></div>
<div style="position:absolute;left:218px;top:1938px;width:922px;height:48px;background:#393B40;border-radius:8px;"></div>
<svg style="position:absolute;left:224.0px;top:1861.0px;" width="20" height="12.0" viewBox="0 0 20 12.0" fill="none" stroke-linecap="round" stroke-linejoin="round"><path d="M2 2L10.0 10.0L18 2" stroke="#A8ADB5" stroke-width="2"/></svg>
<svg style="position:absolute;left:254px;top:1845px;" width="44" height="44" viewBox="0 0 44 44" fill="none" stroke-linecap="round" stroke-linejoin="round"><path d="M16 25Q11 21 12 18Q14 15.5 19 17" stroke="#111" stroke-width="1.2" fill="none"/><path d="M14 27L19.5 29" stroke="#111" stroke-width="1.6"/><path d="M8.5 30.5L13 26Q18 21.5 23.5 20L27 23.5Q31 27 35.5 31.5Q28 28.5 19 26.5L13.5 27.5Z" fill="#D9A530" stroke="#1a1a1a" stroke-width="0.5"/><path d="M23 14L25.3 15.3H30.7L33 14V19.5Q31.5 23.5 28 25.5Q24.5 23.5 23 19.5Z" fill="#F6D67A" stroke="#111" stroke-width="0.6"/><path d="M22.5 12.5L25.5 15.5L23 16.5ZM33.5 12.5L30.5 15.5L33 16.5Z" fill="#111"/><ellipse cx="23.3" cy="22.3" rx="1.6" ry="1.4" fill="#111"/><ellipse cx="32.7" cy="22.3" rx="1.6" ry="1.4" fill="#111"/><path d="M26 19.5L27 20.3M30 19.5L29 20.3M27.3 21.8H28.7" stroke="#8a6a2a" stroke-width="0.7"/></svg>
<div style="position:absolute;left:299px;top:1854px;font-family:'Liberation Sans', sans-serif;font-size:27px;line-height:27px;font-weight:400;color:#DFE1E5;letter-spacing:0.35px;white-space:pre;">Tomcat Server</div>
<svg style="position:absolute;left:262.0px;top:1909.0px;" width="20" height="12.0" viewBox="0 0 20 12.0" fill="none" stroke-linecap="round" stroke-linejoin="round"><path d="M2 2L10.0 10.0L18 2" stroke="#A8ADB5" stroke-width="2"/></svg>
<svg style="position:absolute;left:298px;top:1900px;" width="30" height="30" viewBox="0 0 30 30" fill="none" stroke-linecap="round" stroke-linejoin="round"><path d="M22 6Q25 4 25 4M23.5 9A10 10 0 1 0 25 17" stroke="#CED0D6" stroke-width="2.2"/><path d="M19 3.5H25V9.5" stroke="#CED0D6" stroke-width="2.2"/></svg>
<div style="position:absolute;left:337px;top:1902px;font-family:'Liberation Sans', sans-serif;font-size:27px;line-height:27px;font-weight:400;color:#DFE1E5;letter-spacing:0.35px;white-space:pre;">Finished</div>
<svg style="position:absolute;left:300.0px;top:1957.0px;" width="20" height="12.0" viewBox="0 0 20 12.0" fill="none" stroke-linecap="round" stroke-linejoin="round"><path d="M2 2L10.0 10.0L18 2" stroke="#A8ADB5" stroke-width="2"/></svg>
<svg style="position:absolute;left:330px;top:1941px;" width="44" height="44" viewBox="0 0 44 44" fill="none" stroke-linecap="round" stroke-linejoin="round"><path d="M16 25Q11 21 12 18Q14 15.5 19 17" stroke="#111" stroke-width="1.2" fill="none"/><path d="M14 27L19.5 29" stroke="#111" stroke-width="1.6"/><path d="M8.5 30.5L13 26Q18 21.5 23.5 20L27 23.5Q31 27 35.5 31.5Q28 28.5 19 26.5L13.5 27.5Z" fill="#D9A530" stroke="#1a1a1a" stroke-width="0.5"/><path d="M23 14L25.3 15.3H30.7L33 14V19.5Q31.5 23.5 28 25.5Q24.5 23.5 23 19.5Z" fill="#F6D67A" stroke="#111" stroke-width="0.6"/><path d="M22.5 12.5L25.5 15.5L23 16.5ZM33.5 12.5L30.5 15.5L33 16.5Z" fill="#111"/><ellipse cx="23.3" cy="22.3" rx="1.6" ry="1.4" fill="#111"/><ellipse cx="32.7" cy="22.3" rx="1.6" ry="1.4" fill="#111"/><path d="M26 19.5L27 20.3M30 19.5L29 20.3M27.3 21.8H28.7" stroke="#8a6a2a" stroke-width="0.7"/></svg>
<div style="position:absolute;left:360px;top:1965px;width:11px;height:11px;background:#E8552F;border-radius:1px;"></div>
<div style="position:absolute;left:375px;top:1950px;font-family:'Liberation Sans', sans-serif;font-size:26px;line-height:26px;font-weight:700;color:#DFE1E5;letter-spacing:0.25px;white-space:pre;">Tomcat 10.1.23</div>
<div style="position:absolute;left:576px;top:1950px;font-family:'Liberation Sans', sans-serif;font-size:27px;line-height:27px;font-weight:400;color:#6F737A;letter-spacing:0.4px;white-space:pre;">[local]</div>
<svg style="position:absolute;left:374px;top:1993px;" width="64" height="36" viewBox="0 0 64 36" fill="none" stroke-linecap="round" stroke-linejoin="round"><path d="M16 3L21.5 8.5L16 14L10.5 8.5Z" fill="#3B3D42" stroke="#CED0D6" stroke-width="1.6"/><path d="M8 11L13.5 16.5L8 22L2.5 16.5Z" fill="#25324D" stroke="#548AF7" stroke-width="1.8"/><path d="M18 17L24 11L30 17" stroke="#548AF7" stroke-width="1.8"/><path d="M16 19L12 25L16 31" stroke="#CED0D6" stroke-width="1.6"/><circle cx="24" cy="25" r="7.2" fill="#27282A" stroke="#CED0D6" stroke-width="1.6"/><ellipse cx="24" cy="25" rx="3" ry="7.2" stroke="#CED0D6" stroke-width="1.4"/><path d="M17 25H31" stroke="#CED0D6" stroke-width="1.4"/><path d="M37 18L43 25L59 9" stroke="#5FB865" stroke-width="3"/></svg>
<div style="position:absolute;left:445px;top:1998px;font-family:'Liberation Sans', sans-serif;font-size:27px;line-height:27px;font-weight:400;color:#DFE1E5;letter-spacing:0.3px;white-space:pre;">BookManagement:war exploded</div>
<div style="position:absolute;left:850px;top:1998px;font-family:'Liberation Sans', sans-serif;font-size:27px;line-height:27px;font-weight:400;color:#6F737A;letter-spacing:0.45px;white-space:pre;">[Synchronized]</div>
<svg style="position:absolute;left:224.0px;top:2053.0px;" width="20" height="12.0" viewBox="0 0 20 12.0" fill="none" stroke-linecap="round" stroke-linejoin="round"><path d="M2 2L10.0 10.0L18 2" stroke="#A8ADB5" stroke-width="2"/></svg>
<svg style="position:absolute;left:260.5px;top:2043px;" width="32" height="32" viewBox="0 0 16 16" fill="none" stroke-linecap="round" stroke-linejoin="round"><path d="M2.5 2.5H6.2L8.2 4.5H13.5A1 1 0 0 1 14.5 5.5V12.5A1 1 0 0 1 13.5 13.5H2.5A1 1 0 0 1 1.5 12.5V3.5A1 1 0 0 1 2.5 2.5Z" fill="#3B3D42" stroke="#CED0D6" stroke-width="1"/></svg>
<div style="position:absolute;left:299px;top:2046px;font-family:'Liberation Sans', sans-serif;font-size:27px;line-height:27px;font-weight:400;color:#DFE1E5;letter-spacing:0.35px;white-space:pre;">Database</div>
<svg style="position:absolute;left:262.0px;top:2101.0px;" width="20" height="12.0" viewBox="0 0 20 12.0" fill="none" stroke-linecap="round" stroke-linejoin="round"><path d="M2 2L10.0 10.0L18 2" stroke="#A8ADB5" stroke-width="2"/></svg>
<svg style="position:absolute;left:298px;top:2091px;" width="34" height="34" viewBox="0 0 34 34" fill="none" stroke-linecap="round" stroke-linejoin="round"><path d="M3 4Q12 4 18 12Q22 18 24 24Q27 26 30 30M8 5Q6 10 10 14M24 24Q20 26 18 23" stroke="#3E9FD9" stroke-width="2"/></svg>
<div style="position:absolute;left:337px;top:2094px;font-family:'Liberation Sans', sans-serif;font-size:27px;line-height:27px;font-weight:400;color:#DFE1E5;letter-spacing:0.35px;white-space:pre;">@localhost</div>
<svg style="position:absolute;left:334px;top:2140px;" width="40" height="28" viewBox="0 0 40 28" fill="none" stroke-linecap="round" stroke-linejoin="round"><rect x="2.5" y="11" width="6" height="7" stroke="#CED0D6" stroke-width="1.8"/><path d="M8.5 4.5H17Q26 4.5 26 14Q26 23.5 17 23.5H8.5Z" stroke="#CED0D6" stroke-width="1.8"/><path d="M26 8.5H34M26 19H34" stroke="#CED0D6" stroke-width="1.8"/></svg>
<div style="position:absolute;left:375px;top:2142px;font-family:'Liberation Sans', sans-serif;font-size:27px;line-height:27px;font-weight:400;color:#DFE1E5;letter-spacing:0.35px;white-space:pre;">console</div>
<div style="position:absolute;left:1193px;top:1787px;font-family:'Liberation Sans', sans-serif;font-size:27px;line-height:27px;font-weight:400;color:#DFE1E5;letter-spacing:0.3px;white-space:pre;">Server</div>
<div style="position:absolute;left:1166px;top:1832px;width:2262px;height:2px;background:#1C1D1F;border-radius:0px;"></div>
<div style="position:absolute;left:1166px;top:1830px;width:134px;height:4px;background:#55585E;border-radius:0px;"></div>
<svg style="position:absolute;left:1323px;top:1785px;" width="30" height="26" viewBox="0 0 30 26" fill="none" stroke-linecap="round" stroke-linejoin="round"><rect x="2" y="2" width="26" height="22" rx="3" fill="#3B3D42" stroke="#CED0D6" stroke-width="2"/><path d="M7 8.5L11 12L7 15.5M13 18H19" stroke="#CED0D6" stroke-width="2"/></svg>
<div style="position:absolute;left:1365px;top:1786px;font-family:'Liberation Sans', sans-serif;font-size:27px;line-height:27px;font-weight:400;color:#DFE1E5;letter-spacing:0.45px;white-space:pre;">Tomcat Catalina Log</div>
<svg style="position:absolute;left:1699px;top:1785px;" width="30" height="26" viewBox="0 0 30 26" fill="none" stroke-linecap="round" stroke-linejoin="round"><rect x="2" y="2" width="26" height="22" rx="3" fill="#3B3D42" stroke="#CED0D6" stroke-width="2"/><path d="M7 8.5L11 12L7 15.5M13 18H19" stroke="#CED0D6" stroke-width="2"/></svg>
<div style="position:absolute;left:1740px;top:1786px;font-family:'Liberation Sans', sans-serif;font-size:27px;line-height:27px;font-weight:400;color:#DFE1E5;letter-spacing:0.45px;white-space:pre;">Tomcat Localhost Log</div>
<svg style="position:absolute;left:2081px;top:1781px;" width="32" height="34" viewBox="0 0 32 34" fill="none" stroke-linecap="round" stroke-linejoin="round"><path d="M6 6.5Q6 4 8.2 5.2L26.5 15Q28.5 17 26.5 19L8.2 28.8Q6 30 6 27.5Z" fill="#1F2B21" stroke="#5FB865" stroke-width="2.4"/></svg>
<svg style="position:absolute;left:2130px;top:1781px;" width="36" height="34" viewBox="0 0 36 34" fill="none" stroke-linecap="round" stroke-linejoin="round"><path d="M13 8A5 5 0 0 1 23 8" stroke="#5FB865" stroke-width="2.4"/><rect x="10.5" y="9" width="15" height="21" rx="7.5" fill="#1F2B21" stroke="#5FB865" stroke-width="2.4"/><path d="M3 19H10M26 19H33M5 11L10.5 14M31 11L25.5 14M5 27.5L10.5 24M31 27.5L25.5 24" stroke="#5FB865" stroke-width="2.4"/></svg>
<div style="position:absolute;left:2188px;top:1786px;width:24px;height:24px;background:#4F5154;border-radius:4px;"></div>
<svg style="position:absolute;left:2236px;top:1780px;" width="34" height="34" viewBox="0 0 34 34" fill="none" stroke-linecap="round" stroke-linejoin="round"><path d="M26 10A11 11 0 1 0 27 22" stroke="#55575B" stroke-width="2.2"/><path d="M20 9H27V2" stroke="#55575B" stroke-width="2.2"/></svg>
<div style="position:absolute;left:2284px;top:1778px;width:2px;height:40px;background:#3A3C40;border-radius:0px;"></div>
<svg style="position:absolute;left:2300px;top:1784px;" width="38" height="34" viewBox="0 0 38 34" fill="none" stroke-linecap="round" stroke-linejoin="round"><path d="M4 25Q3 5 19 5Q35 5 34 25Z" stroke="#55575B" stroke-width="2.2"/><circle cx="17" cy="18" r="3" stroke="#55575B" stroke-width="2"/><path d="M19.5 15.5L26 10" stroke="#55575B" stroke-width="2"/></svg>
<svg style="position:absolute;left:2328px;top:1808px;" width="10" height="10" viewBox="0 0 10 10" fill="none" stroke-linecap="round" stroke-linejoin="round"><path d="M9 1V9H1Z" fill="#55575B"/></svg>
<div style="position:absolute;left:2367px;top:1785px;width:6px;height:6px;border-radius:3px;background:#DFE1E5"></div>
<div style="position:absolute;left:2367px;top:1795px;width:6px;height:6px;border-radius:3px;background:#DFE1E5"></div>
<div style="position:absolute;left:2367px;top:1805px;width:6px;height:6px;border-radius:3px;background:#DFE1E5"></div>
<div style="position:absolute;left:1196px;top:1834px;width:2px;height:592px;background:#1F2022;border-radius:0px;"></div>
<div style="position:absolute;left:1198px;top:1834px;width:64px;height:592px;background:#2A2B2E;border-radius:0px;"></div>
<div style="position:absolute;left:1262px;top:1834px;width:2072px;height:592px;background:#1D1E20;border-radius:0px;"></div>
<svg style="position:absolute;left:1168px;top:1852px;" width="32" height="28" viewBox="0 0 32 28" fill="none" stroke-linecap="round" stroke-linejoin="round"><path d="M4 14L11 21L26 5" stroke="#5FB865" stroke-width="3.2"/></svg>
<svg style="position:absolute;left:1212px;top:1856px;" width="36" height="36" viewBox="0 0 36 36" fill="none" stroke-linecap="round" stroke-linejoin="round"><path d="M5 18H31M25 12L31 18L25 24M12 6H18V12M18 6L10 14M12 30H18V24M18 30L10 22" stroke="#5A5C60" stroke-width="1.8"/></svg>
<svg style="position:absolute;left:1212px;top:1908px;" width="36" height="36" viewBox="0 0 36 36" fill="none" stroke-linecap="round" stroke-linejoin="round"><path d="M31 18H5M11 12L5 18L11 24M20 6H26V12M26 6L18 14M20 30H26V24M26 30L18 22" stroke="#5A5C60" stroke-width="1.8"/></svg>
<svg style="position:absolute;left:1212px;top:1960px;" width="36" height="34" viewBox="0 0 36 34" fill="none" stroke-linecap="round" stroke-linejoin="round"><path d="M29 10Q25 4 18 4Q9 4 6 13M7 21Q11 28 18 28Q27 28 30 19" stroke="#CED0D6" stroke-width="2"/><path d="M3 10L6 14L10 11M33 22L30 18L26 21" stroke="#CED0D6" stroke-width="2"/></svg>
<svg style="position:absolute;left:1212px;top:2014px;" width="40" height="36" viewBox="0 0 40 36" fill="none" stroke-linecap="round" stroke-linejoin="round"><path d="M20 26H8Q5 26 5 23V7Q5 4 8 4H26Q29 4 29 7V15" fill="#3B3D42" stroke="#CED0D6" stroke-width="2"/><path d="M10 9H13M15 9H18" stroke="#CED0D6" stroke-width="2"/><path d="M26 17V32M20.5 26.5L26 32L31.5 26.5" stroke="#5FB865" stroke-width="2"/></svg>
<div style="position:absolute;left:2815px;top:2179px;width:280px;height:43px;background:#393B40;border-radius:0px;"></div>
<div style="position:absolute;left:1264px;top:1834px;width:2069px;height:563px;overflow:hidden">
<div style="position:absolute;left:22px;top:3.5px;font-family:'Liberation Mono', monospace;font-size:26px;line-height:26px;color:#F75464;white-space:pre">09-Jun-2024 13:29:45.884 INFO [main] org.apache.catalina.core.StandardService.stopInternal Stopping service [Catalina]</div>
<div style="position:absolute;left:22px;top:47.59999999999991px;font-family:'Liberation Mono', monospace;font-size:26px;line-height:26px;color:#F75464;white-space:pre">09-Jun-2024 13:29:45.908 WARNING [main] org.apache.catalina.loader.WebappClassLoaderBase.clearReferencesJdbc The web application [ROOT] registered the JDBC driver</div>
<div style="position:absolute;left:22px;top:91.70000000000005px;font-family:'Liberation Mono', monospace;font-size:26px;line-height:26px;color:#F75464;white-space:pre">09-Jun-2024 13:29:45.908 WARNING [main] org.apache.catalina.loader.WebappClassLoaderBase.clearReferencesJdbc The web application [ROOT] registered the JDBC driver</div>
<div style="position:absolute;left:22px;top:135.79999999999995px;font-family:'Liberation Mono', monospace;font-size:26px;line-height:26px;color:#F75464;white-space:pre">09-Jun-2024 13:29:45.909 WARNING [main] org.apache.catalina.loader.WebappClassLoaderBase.clearReferencesThreads The web application [ROOT] appears to have started</div>
<div style="position:absolute;left:22px;top:179.9000000000001px;font-family:'Liberation Mono', monospace;font-size:26px;line-height:26px;color:#F75464;white-space:pre"> java.base@17.0.11/java.lang.Object.wait(<span style="color:#8C8F96;text-decoration:underline;text-underline-offset:5px;text-decoration-thickness:1.5px">Native Method</span>)</div>
<div style="position:absolute;left:22px;top:224.0px;font-family:'Liberation Mono', monospace;font-size:26px;line-height:26px;color:#F75464;white-space:pre"> java.base@17.0.11/java.lang.ref.ReferenceQueue.remove(<span style="color:#8C8F96;text-decoration:underline;text-underline-offset:5px;text-decoration-thickness:1.5px">ReferenceQueue.java:155</span>)</div>
<div style="position:absolute;left:22px;top:268.0999999999999px;font-family:'Liberation Mono', monospace;font-size:26px;line-height:26px;color:#F75464;white-space:pre"> com.mysql.cj.jdbc.AbandonedConnectionCleanupThread.run(<span style="color:#8C8F96;text-decoration:underline;text-underline-offset:5px;text-decoration-thickness:1.5px">AbandonedConnectionCleanupThread.java:91</span>)</div>
<div style="position:absolute;left:22px;top:312.1999999999998px;font-family:'Liberation Mono', monospace;font-size:26px;line-height:26px;color:#F75464;white-space:pre"> java.base@17.0.11/java.util.concurrent.ThreadPoolExecutor.runWorker(<span style="color:#8C8F96;text-decoration:underline;text-underline-offset:5px;text-decoration-thickness:1.5px">ThreadPoolExecutor.java:1136</span>)</div>
<div style="position:absolute;left:22px;top:356.3000000000002px;font-family:'Liberation Mono', monospace;font-size:26px;line-height:26px;color:#F75464;white-space:pre"> java.base@17.0.11/java.util.concurrent.ThreadPoolExecutor$Worker.run(<span style="color:#8C8F96;text-decoration:underline;text-underline-offset:5px;text-decoration-thickness:1.5px">ThreadPoolExecutor.java:635</span>) <span style="color:#8C8F96">&lt;1 internal line&gt;</span></div>
<div style="position:absolute;left:22px;top:400.4000000000001px;font-family:'Liberation Mono', monospace;font-size:26px;line-height:26px;color:#F75464;white-space:pre">09-Jun-2024 13:29:45.916 INFO [main] org.apache.coyote.AbstractProtocol.stop Stopping ProtocolHandler [&quot;ht<span></span>tp-nio-8080&quot;]</div>
<div style="position:absolute;left:22px;top:444.5px;font-family:'Liberation Mono', monospace;font-size:26px;line-height:26px;color:#F75464;white-space:pre">09-Jun-2024 13:29:45.921 INFO [main] org.apache.coyote.AbstractProtocol.destroy Destroying ProtocolHandler [&quot;ht<span></span>tp-nio-8080&quot;]</div>
<div style="position:absolute;left:22px;top:488.5999999999999px;font-family:'Liberation Mono', monospace;font-size:26px;line-height:26px;color:#BCBEC4;white-space:pre">Disconnected from server</div>
</div>
<svg style="position:absolute;left:1266.0px;top:2193.0px;" width="10.0" height="16" viewBox="0 0 10.0 16" fill="none" stroke-linecap="round" stroke-linejoin="round"><path d="M2 2L8.0 8.0L2 14" stroke="#6F737A" stroke-width="1.8"/></svg>
<div style="position:absolute;left:1286px;top:2398px;width:2048px;height:28px;background:#35383A;border-radius:0px;"></div>
<div style="position:absolute;left:1292px;top:2404px;width:218px;height:16px;background:#505154;border-radius:8px;box-shadow:0 0 0 1px #2a2c2e"></div>
<div style="position:absolute;left:3334px;top:1834px;width:28px;height:563px;background:#35383A;border-radius:0px;"></div>
<div style="position:absolute;left:3340px;top:2309px;width:16px;height:84px;background:#505154;border-radius:8px;box-shadow:0 0 0 1px #2a2c2e"></div>
<div style="position:absolute;left:3361px;top:1834px;width:2px;height:592px;background:#1F2022;border-radius:0px;"></div>
<svg style="position:absolute;left:3377px;top:1855px;" width="36" height="36" viewBox="0 0 36 36" fill="none" stroke-linecap="round" stroke-linejoin="round"><path d="M18 30V6M9 15L18 6L27 15" stroke="#CED0D6" stroke-width="2"/></svg>
<svg style="position:absolute;left:3377px;top:1909px;" width="36" height="36" viewBox="0 0 36 36" fill="none" stroke-linecap="round" stroke-linejoin="round"><path d="M18 6V30M9 21L18 30L27 21" stroke="#CED0D6" stroke-width="2"/></svg>
<svg style="position:absolute;left:3377px;top:1962px;" width="36" height="36" viewBox="0 0 36 36" fill="none" stroke-linecap="round" stroke-linejoin="round"><path d="M4 7H32M4 17H28Q32 17 32 21Q32 25 28 25H20M4 27H13M22 22L19 25L22 28" stroke="#CED0D6" stroke-width="2"/></svg>
<svg style="position:absolute;left:3377px;top:2012px;" width="36" height="36" viewBox="0 0 36 36" fill="none" stroke-linecap="round" stroke-linejoin="round"><path d="M4 7H14M4 17H14M4 29H32M24 6V24M18 18L24 24L30 18" stroke="#CED0D6" stroke-width="2"/></svg>
<svg style="position:absolute;left:3377px;top:2064px;" width="36" height="36" viewBox="0 0 36 36" fill="none" stroke-linecap="round" stroke-linejoin="round"><path d="M10 12V5H26V12M6 26H3V12H33V26H30M10 20H26V32H10Z" stroke="#CED0D6" stroke-width="2"/><circle cx="28" cy="16" r="1.3" fill="#CED0D6"/></svg>
<svg style="position:absolute;left:3377px;top:2116px;" width="36" height="36" viewBox="0 0 36 36" fill="none" stroke-linecap="round" stroke-linejoin="round"><path d="M5 8H31M14 8V4H22V8M8 8L9 32H27L28 8M14 14V26M22 14V26" stroke="#CED0D6" stroke-width="2"/></svg>
<svg style="position:absolute;left:138px;top:2443px;" width="20" height="20" viewBox="0 0 20 20" fill="none" stroke-linecap="round" stroke-linejoin="round"><rect x="2.5" y="2.5" width="14" height="14" rx="3" fill="#25324D" stroke="#548AF7" stroke-width="2"/></svg>
<div style="position:absolute;left:164.5px;top:2442px;font-family:'Liberation Sans', sans-serif;font-size:27px;line-height:27px;font-weight:400;color:#989BA1;letter-spacing:0.35px;white-space:pre;">BookManagement</div>
<div style="position:absolute;left:437px;top:2442px;font-family:'Liberation Sans', sans-serif;font-size:27px;line-height:27px;font-weight:400;color:#989BA1;letter-spacing:0.35px;white-space:pre;">src</div>
<div style="position:absolute;left:522px;top:2442px;font-family:'Liberation Sans', sans-serif;font-size:27px;line-height:27px;font-weight:400;color:#989BA1;letter-spacing:0.35px;white-space:pre;">main</div>
<div style="position:absolute;left:630px;top:2442px;font-family:'Liberation Sans', sans-serif;font-size:27px;line-height:27px;font-weight:400;color:#989BA1;letter-spacing:0.35px;white-space:pre;">java</div>
<div style="position:absolute;left:728px;top:2442px;font-family:'Liberation Sans', sans-serif;font-size:27px;line-height:27px;font-weight:400;color:#989BA1;letter-spacing:0.35px;white-space:pre;">com</div>
<div style="position:absolute;left:830px;top:2442px;font-family:'Liberation Sans', sans-serif;font-size:27px;line-height:27px;font-weight:400;color:#989BA1;letter-spacing:0.35px;white-space:pre;">study</div>
<div style="position:absolute;left:948px;top:2442px;font-family:'Liberation Sans', sans-serif;font-size:27px;line-height:27px;font-weight:400;color:#989BA1;letter-spacing:0.35px;white-space:pre;">listener</div>
<div style="position:absolute;left:1128.6px;top:2442px;font-family:'Liberation Sans', sans-serif;font-size:27px;line-height:27px;font-weight:400;color:#989BA1;letter-spacing:0.35px;white-space:pre;">MysqlListener</div>
<div style="position:absolute;left:1389.6px;top:2442px;font-family:'Liberation Sans', sans-serif;font-size:27px;line-height:27px;font-weight:400;color:#989BA1;letter-spacing:0.35px;white-space:pre;">contextDestroyed</div>
<svg style="position:absolute;left:405.5px;top:2446.0px;" width="11.0" height="18" viewBox="0 0 11.0 18" fill="none" stroke-linecap="round" stroke-linejoin="round"><path d="M2 2L9.0 9.0L2 16" stroke="#989BA1" stroke-width="2"/></svg>
<svg style="position:absolute;left:492.5px;top:2446.0px;" width="11.0" height="18" viewBox="0 0 11.0 18" fill="none" stroke-linecap="round" stroke-linejoin="round"><path d="M2 2L9.0 9.0L2 16" stroke="#989BA1" stroke-width="2"/></svg>
<svg style="position:absolute;left:599.5px;top:2446.0px;" width="11.0" height="18" viewBox="0 0 11.0 18" fill="none" stroke-linecap="round" stroke-linejoin="round"><path d="M2 2L9.0 9.0L2 16" stroke="#989BA1" stroke-width="2"/></svg>
<svg style="position:absolute;left:699.5px;top:2446.0px;" width="11.0" height="18" viewBox="0 0 11.0 18" fill="none" stroke-linecap="round" stroke-linejoin="round"><path d="M2 2L9.0 9.0L2 16" stroke="#989BA1" stroke-width="2"/></svg>
<svg style="position:absolute;left:802.5px;top:2446.0px;" width="11.0" height="18" viewBox="0 0 11.0 18" fill="none" stroke-linecap="round" stroke-linejoin="round"><path d="M2 2L9.0 9.0L2 16" stroke="#989BA1" stroke-width="2"/></svg>
<svg style="position:absolute;left:917.5px;top:2446.0px;" width="11.0" height="18" viewBox="0 0 11.0 18" fill="none" stroke-linecap="round" stroke-linejoin="round"><path d="M2 2L9.0 9.0L2 16" stroke="#989BA1" stroke-width="2"/></svg>
<svg style="position:absolute;left:1057.5px;top:2446.0px;" width="11.0" height="18" viewBox="0 0 11.0 18" fill="none" stroke-linecap="round" stroke-linejoin="round"><path d="M2 2L9.0 9.0L2 16" stroke="#989BA1" stroke-width="2"/></svg>
<svg style="position:absolute;left:1319.5px;top:2446.0px;" width="11.0" height="18" viewBox="0 0 11.0 18" fill="none" stroke-linecap="round" stroke-linejoin="round"><path d="M2 2L9.0 9.0L2 16" stroke="#989BA1" stroke-width="2"/></svg>
<svg style="position:absolute;left:1086px;top:2439px;" width="32" height="32" viewBox="0 0 16 16" fill="none" stroke-linecap="round" stroke-linejoin="round"><circle cx="8" cy="8" r="6.5" fill="#25324D" stroke="#548AF7" stroke-width="1"/><path d="M10.6 5.9A3.25 3.25 0 1 0 10.6 10.1" stroke="#548AF7" stroke-width="1"/></svg>
<svg style="position:absolute;left:1350px;top:2441px;" width="32" height="32" viewBox="0 0 32 32" fill="none" stroke-linecap="round" stroke-linejoin="round"><circle cx="16" cy="16" r="12.5" fill="#3A2426" stroke="#E55757" stroke-width="2.2"/><path d="M10 21V14Q10 11 12.5 11Q15.5 11 15.5 14V21M15.5 14Q15.5 11 18.5 11Q21.5 11 21.5 14V21" stroke="#E55757" stroke-width="2"/></svg>
<svg style="position:absolute;left:2896px;top:2440px;" width="30" height="30" viewBox="0 0 30 30" fill="none" stroke-linecap="round" stroke-linejoin="round"><defs><linearGradient id="vg" x1="0" y1="1" x2="1" y2="0"><stop offset="0" stop-color="#21D789"/><stop offset="0.5" stop-color="#07C3F2"/><stop offset="1" stop-color="#087CFA"/></linearGradient></defs><path d="M4 5H11L14.5 27H8.5Z" fill="#21D789"/><path d="M8.5 27L21 3H28L14.5 27Z" fill="url(#vg)"/></svg>
<div style="position:absolute;left:2960px;top:2442px;font-family:'Liberation Sans', sans-serif;font-size:27px;line-height:27px;font-weight:400;color:#989BA1;letter-spacing:0.6px;white-space:pre;">19:33</div>
<div style="position:absolute;left:3060px;top:2442px;font-family:'Liberation Sans', sans-serif;font-size:27px;line-height:27px;font-weight:400;color:#989BA1;letter-spacing:0.4px;white-space:pre;">LF</div>
<div style="position:absolute;left:3123px;top:2442px;font-family:'Liberation Sans', sans-serif;font-size:27px;line-height:27px;font-weight:400;color:#989BA1;letter-spacing:0.5px;white-space:pre;">UTF-8</div>
<svg style="position:absolute;left:3232px;top:2436px;" width="36" height="36" viewBox="0 0 44 44" fill="none" stroke-linecap="round" stroke-linejoin="round"><path d="M9 15Q9 8 15 8Q21 8 21 15Q21 20 15 20Q9 20 9 15ZM23 15Q23 8 29 8Q35 8 35 15Q35 20 29 20Q23 20 23 15Z" stroke="#989BA1" stroke-width="3"/><path d="M7 20Q3 23 4 29Q6 36 22 37Q38 36 40 29Q41 23 37 20Q32 24 22 24Q12 24 7 20Z" fill="#989BA1"/><rect x="17" y="27" width="2.6" height="5" rx="1.3" fill="#27282A"/><rect x="25" y="27" width="2.6" height="5" rx="1.3" fill="#27282A"/></svg>
<div style="position:absolute;left:3299px;top:2442px;font-family:'Liberation Sans', sans-serif;font-size:27px;line-height:27px;font-weight:400;color:#989BA1;letter-spacing:0.55px;white-space:pre;">4 spaces</div>
<svg style="position:absolute;left:3444px;top:2438px;" width="36" height="36" viewBox="0 0 36 36" fill="none" stroke-linecap="round" stroke-linejoin="round"><rect x="4" y="15" width="20" height="16" rx="3" stroke="#989BA1" stroke-width="2.4"/><path d="M19 15V10Q19 4 25 4Q31 4 31 10V12" stroke="#989BA1" stroke-width="2.4"/><path d="M14 21V25" stroke="#989BA1" stroke-width="2.4"/></svg>
</div>
<div style="position:absolute;left:112px;top:76px;width:3398px;height:2410px;box-sizing:border-box;border:2px solid rgba(255,255,255,0.2);border-top-color:rgba(255,255,255,0.34);border-left-color:rgba(255,255,255,0.15);border-radius:20px;pointer-events:none"></div>
</body></html>
